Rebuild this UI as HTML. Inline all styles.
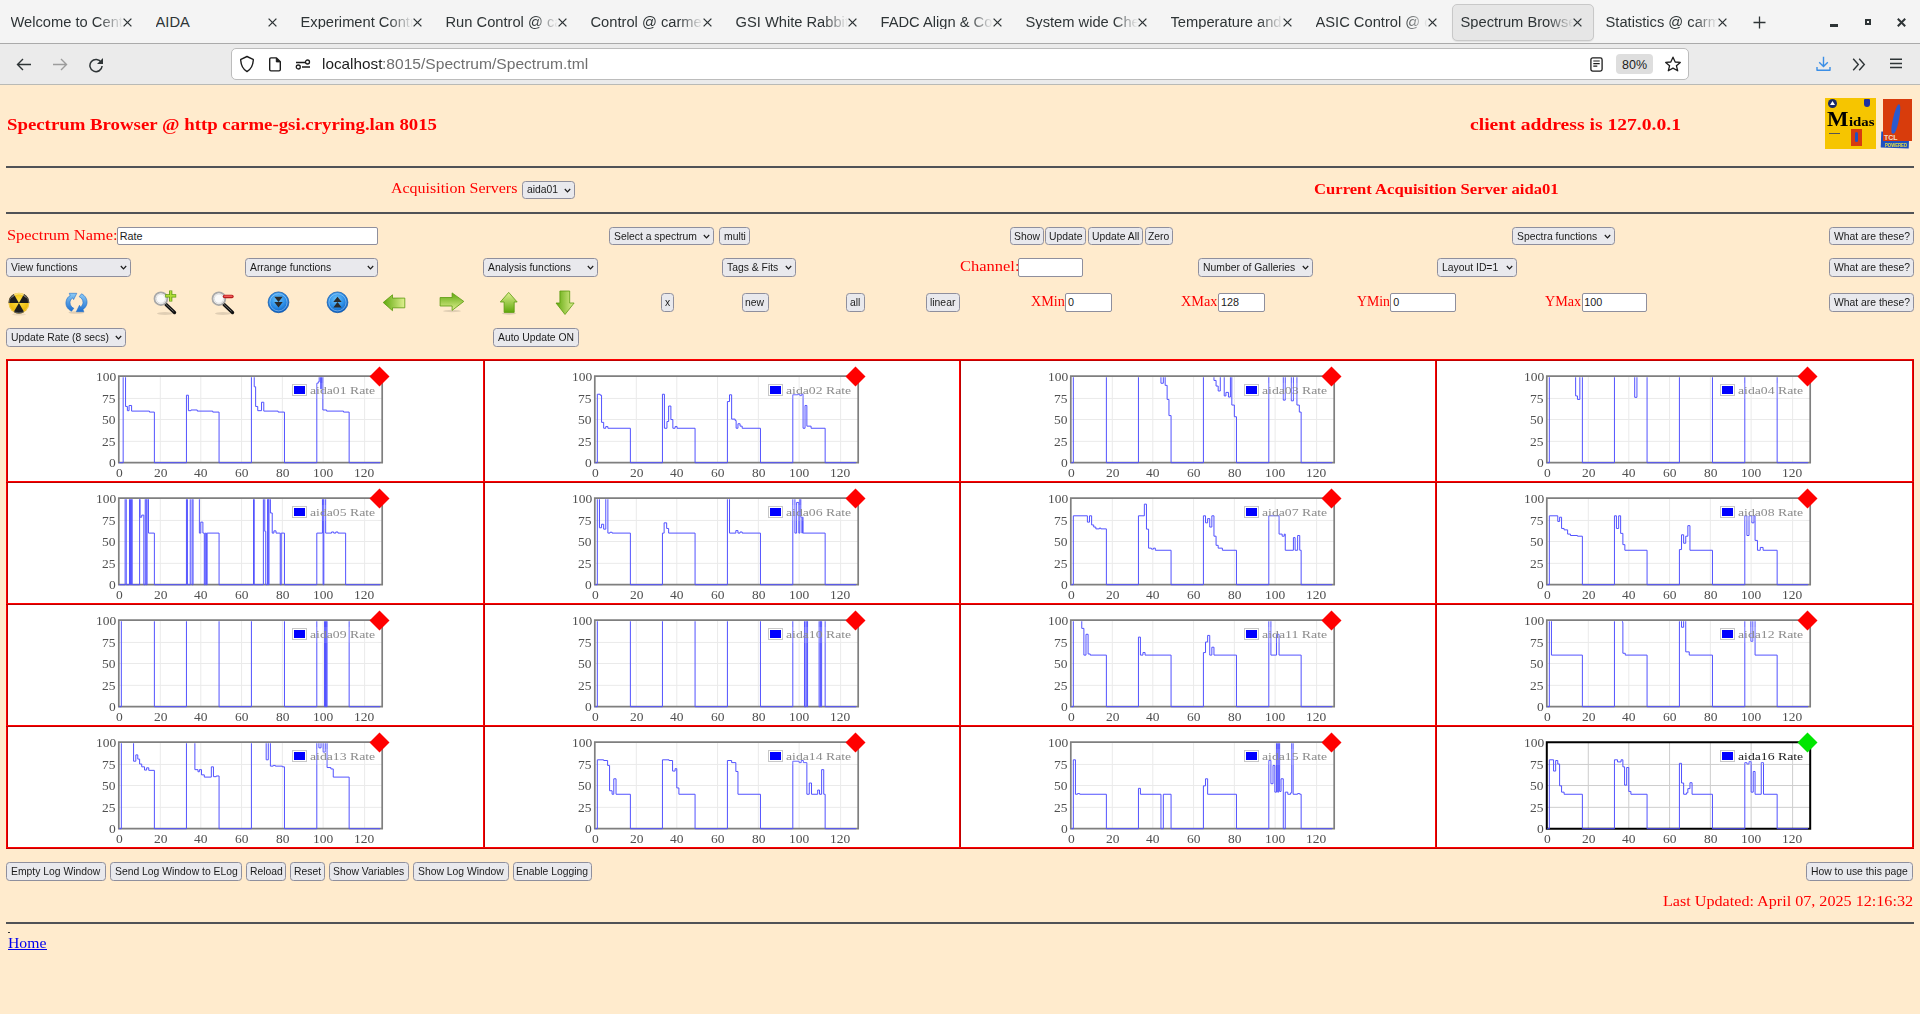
<!DOCTYPE html><html><head><meta charset="utf-8"><style>html,body{margin:0;padding:0;width:1920px;height:1014px;overflow:hidden;background:#ffebcd}</style></head><body><div style="position:relative;width:1920px;height:1014px;overflow:hidden">
<div style="position:absolute;left:0px;top:0px;width:1920px;height:43px;background:#f4f4f4"></div>
<div style="position:absolute;left:0px;top:43px;width:1920px;height:1px;background:#aaaaaa"></div>
<div style="position:absolute;left:0px;top:44px;width:1920px;height:40px;background:#ebebeb"></div>
<div style="position:absolute;left:0px;top:84px;width:1920px;height:1px;background:#b9bab6"></div>
<div style="position:absolute;left:10.5px;top:14.56px;width:112px;overflow:hidden;white-space:nowrap;font-family:'Liberation Sans', sans-serif;font-size:14.7px;line-height:14.7px;color:#2e3436;-webkit-mask-image:linear-gradient(to right, #000 0px, #000 88px, transparent 112px);mask-image:linear-gradient(to right, #000 0px, #000 88px, transparent 112px)">Welcome to Centos</div>
<svg style="position:absolute;left:123.0px;top:17.5px" width="9" height="9" viewBox="0 0 9 9"><path d="M0.6 0.6L8.4 8.4M8.4 0.6L0.6 8.4" stroke="#2e3436" stroke-width="1.3"/></svg>
<div style="position:absolute;left:155.5px;top:14.56px;width:112px;overflow:hidden;white-space:nowrap;font-family:'Liberation Sans', sans-serif;font-size:14.7px;line-height:14.7px;color:#2e3436;-webkit-mask-image:none;mask-image:none">AIDA</div>
<svg style="position:absolute;left:268.0px;top:17.5px" width="9" height="9" viewBox="0 0 9 9"><path d="M0.6 0.6L8.4 8.4M8.4 0.6L0.6 8.4" stroke="#2e3436" stroke-width="1.3"/></svg>
<div style="position:absolute;left:300.5px;top:14.56px;width:112px;overflow:hidden;white-space:nowrap;font-family:'Liberation Sans', sans-serif;font-size:14.7px;line-height:14.7px;color:#2e3436;-webkit-mask-image:linear-gradient(to right, #000 0px, #000 88px, transparent 112px);mask-image:linear-gradient(to right, #000 0px, #000 88px, transparent 112px)">Experiment Control</div>
<svg style="position:absolute;left:413.0px;top:17.5px" width="9" height="9" viewBox="0 0 9 9"><path d="M0.6 0.6L8.4 8.4M8.4 0.6L0.6 8.4" stroke="#2e3436" stroke-width="1.3"/></svg>
<div style="position:absolute;left:445.5px;top:14.56px;width:112px;overflow:hidden;white-space:nowrap;font-family:'Liberation Sans', sans-serif;font-size:14.7px;line-height:14.7px;color:#2e3436;-webkit-mask-image:linear-gradient(to right, #000 0px, #000 88px, transparent 112px);mask-image:linear-gradient(to right, #000 0px, #000 88px, transparent 112px)">Run Control @ carme</div>
<svg style="position:absolute;left:558.0px;top:17.5px" width="9" height="9" viewBox="0 0 9 9"><path d="M0.6 0.6L8.4 8.4M8.4 0.6L0.6 8.4" stroke="#2e3436" stroke-width="1.3"/></svg>
<div style="position:absolute;left:590.5px;top:14.56px;width:112px;overflow:hidden;white-space:nowrap;font-family:'Liberation Sans', sans-serif;font-size:14.7px;line-height:14.7px;color:#2e3436;-webkit-mask-image:linear-gradient(to right, #000 0px, #000 88px, transparent 112px);mask-image:linear-gradient(to right, #000 0px, #000 88px, transparent 112px)">Control @ carme-gsi</div>
<svg style="position:absolute;left:703.0px;top:17.5px" width="9" height="9" viewBox="0 0 9 9"><path d="M0.6 0.6L8.4 8.4M8.4 0.6L0.6 8.4" stroke="#2e3436" stroke-width="1.3"/></svg>
<div style="position:absolute;left:735.5px;top:14.56px;width:112px;overflow:hidden;white-space:nowrap;font-family:'Liberation Sans', sans-serif;font-size:14.7px;line-height:14.7px;color:#2e3436;-webkit-mask-image:linear-gradient(to right, #000 0px, #000 88px, transparent 112px);mask-image:linear-gradient(to right, #000 0px, #000 88px, transparent 112px)">GSI White Rabbit Timing</div>
<svg style="position:absolute;left:848.0px;top:17.5px" width="9" height="9" viewBox="0 0 9 9"><path d="M0.6 0.6L8.4 8.4M8.4 0.6L0.6 8.4" stroke="#2e3436" stroke-width="1.3"/></svg>
<div style="position:absolute;left:880.5px;top:14.56px;width:112px;overflow:hidden;white-space:nowrap;font-family:'Liberation Sans', sans-serif;font-size:14.7px;line-height:14.7px;color:#2e3436;-webkit-mask-image:linear-gradient(to right, #000 0px, #000 88px, transparent 112px);mask-image:linear-gradient(to right, #000 0px, #000 88px, transparent 112px)">FADC Align &amp; Control</div>
<svg style="position:absolute;left:993.0px;top:17.5px" width="9" height="9" viewBox="0 0 9 9"><path d="M0.6 0.6L8.4 8.4M8.4 0.6L0.6 8.4" stroke="#2e3436" stroke-width="1.3"/></svg>
<div style="position:absolute;left:1025.5px;top:14.56px;width:112px;overflow:hidden;white-space:nowrap;font-family:'Liberation Sans', sans-serif;font-size:14.7px;line-height:14.7px;color:#2e3436;-webkit-mask-image:linear-gradient(to right, #000 0px, #000 88px, transparent 112px);mask-image:linear-gradient(to right, #000 0px, #000 88px, transparent 112px)">System wide Checks</div>
<svg style="position:absolute;left:1138.0px;top:17.5px" width="9" height="9" viewBox="0 0 9 9"><path d="M0.6 0.6L8.4 8.4M8.4 0.6L0.6 8.4" stroke="#2e3436" stroke-width="1.3"/></svg>
<div style="position:absolute;left:1170.5px;top:14.56px;width:112px;overflow:hidden;white-space:nowrap;font-family:'Liberation Sans', sans-serif;font-size:14.7px;line-height:14.7px;color:#2e3436;-webkit-mask-image:linear-gradient(to right, #000 0px, #000 88px, transparent 112px);mask-image:linear-gradient(to right, #000 0px, #000 88px, transparent 112px)">Temperature and Status</div>
<svg style="position:absolute;left:1283.0px;top:17.5px" width="9" height="9" viewBox="0 0 9 9"><path d="M0.6 0.6L8.4 8.4M8.4 0.6L0.6 8.4" stroke="#2e3436" stroke-width="1.3"/></svg>
<div style="position:absolute;left:1315.5px;top:14.56px;width:112px;overflow:hidden;white-space:nowrap;font-family:'Liberation Sans', sans-serif;font-size:14.7px;line-height:14.7px;color:#2e3436;-webkit-mask-image:linear-gradient(to right, #000 0px, #000 88px, transparent 112px);mask-image:linear-gradient(to right, #000 0px, #000 88px, transparent 112px)">ASIC Control @ carme</div>
<svg style="position:absolute;left:1428.0px;top:17.5px" width="9" height="9" viewBox="0 0 9 9"><path d="M0.6 0.6L8.4 8.4M8.4 0.6L0.6 8.4" stroke="#2e3436" stroke-width="1.3"/></svg>
<div style="position:absolute;left:1451.5px;top:3.5px;width:142px;height:37px;box-sizing:border-box;background:#e6e6e6;border:1px solid #c8c8c8;border-radius:5px;box-shadow:0 1px 1px rgba(0,0,0,0.08)"></div>
<div style="position:absolute;left:1460.5px;top:14.56px;width:112px;overflow:hidden;white-space:nowrap;font-family:'Liberation Sans', sans-serif;font-size:14.7px;line-height:14.7px;color:#2e3436;-webkit-mask-image:linear-gradient(to right, #000 0px, #000 88px, transparent 112px);mask-image:linear-gradient(to right, #000 0px, #000 88px, transparent 112px)">Spectrum Browser</div>
<svg style="position:absolute;left:1573.0px;top:17.5px" width="9" height="9" viewBox="0 0 9 9"><path d="M0.6 0.6L8.4 8.4M8.4 0.6L0.6 8.4" stroke="#2e3436" stroke-width="1.3"/></svg>
<div style="position:absolute;left:1605.5px;top:14.56px;width:112px;overflow:hidden;white-space:nowrap;font-family:'Liberation Sans', sans-serif;font-size:14.7px;line-height:14.7px;color:#2e3436;-webkit-mask-image:linear-gradient(to right, #000 0px, #000 88px, transparent 112px);mask-image:linear-gradient(to right, #000 0px, #000 88px, transparent 112px)">Statistics @ carme</div>
<svg style="position:absolute;left:1718.0px;top:17.5px" width="9" height="9" viewBox="0 0 9 9"><path d="M0.6 0.6L8.4 8.4M8.4 0.6L0.6 8.4" stroke="#2e3436" stroke-width="1.3"/></svg>
<svg style="position:absolute;left:1753px;top:16px" width="13" height="13" viewBox="0 0 13 13"><path d="M6.5 0.5V12.5M0.5 6.5H12.5" stroke="#2e3436" stroke-width="1.3"/></svg>
<div style="position:absolute;left:1830px;top:24px;width:8px;height:2.5px;background:#2e3436"></div>
<div style="position:absolute;left:1865px;top:19px;width:6px;height:6px;box-sizing:border-box;border:2px solid #2e3436"></div>
<svg style="position:absolute;left:1897px;top:17.5px" width="9" height="9" viewBox="0 0 9 9"><path d="M0.8 0.8L8.2 8.2M8.2 0.8L0.8 8.2" stroke="#2e3436" stroke-width="2"/></svg>
<svg style="position:absolute;left:16px;top:58px" width="16" height="13" viewBox="0 0 16 13"><path d="M15 6.5H2M7 1L1.5 6.5L7 12" fill="none" stroke="#2e3436" stroke-width="1.4"/></svg>
<svg style="position:absolute;left:52px;top:58px" width="16" height="13" viewBox="0 0 16 13"><path d="M1 6.5H14M9 1L14.5 6.5L9 12" fill="none" stroke="#9c9c9c" stroke-width="1.4"/></svg>
<svg style="position:absolute;left:88px;top:57px" width="16" height="16" viewBox="0 0 16 16"><path d="M13.3 5.5A6.1 6.1 0 1 0 14.1 9" fill="none" stroke="#2e3436" stroke-width="1.5"/><path d="M15 1V7H9Z" fill="#2e3436"/></svg>
<div style="position:absolute;left:231px;top:48px;width:1458px;height:32px;box-sizing:border-box;background:#fff;border:1px solid #bcbcbc;border-radius:5px"></div>
<svg style="position:absolute;left:239px;top:55px" width="16" height="18" viewBox="0 0 16 18"><path d="M8 1.5L14.1 4.4Q14.4 4.6 14.3 5.3C13.9 10.8 11.8 14.5 8 16.6C4.2 14.5 2.1 10.8 1.7 5.3Q1.6 4.6 1.9 4.4Z" fill="none" stroke="#1c1c1c" stroke-width="1.4" stroke-linejoin="round"/></svg>
<svg style="position:absolute;left:268px;top:56.5px" width="14" height="15" viewBox="0 0 14 15"><path d="M1.7 2.2Q1.7 0.9 3 0.9H8.5L12.3 4.7V12.6Q12.3 13.9 11 13.9H3Q1.7 13.9 1.7 12.6Z" fill="none" stroke="#1c1c1c" stroke-width="1.4" stroke-linejoin="round"/><path d="M8.3 1V4.9H12.2" fill="#1c1c1c" stroke="#1c1c1c" stroke-width="1"/></svg>
<svg style="position:absolute;left:295px;top:58.5px" width="16" height="11" viewBox="0 0 16 11"><path d="M1 3.5H10M7 8H15" stroke="#1c1c1c" stroke-width="1.4"/><circle cx="12.5" cy="3" r="2" fill="none" stroke="#1c1c1c" stroke-width="1.3"/><circle cx="3.3" cy="8" r="2" fill="none" stroke="#1c1c1c" stroke-width="1.3"/></svg>
<div style="position:absolute;left:321.50px;top:56.30px;white-space:nowrap;font-family:'Liberation Sans', sans-serif;font-weight:normal;font-size:15px;line-height:15px;color:#1c1c1c;transform:scaleX(1.0202);transform-origin:0 0;">localhost</div>
<div style="position:absolute;left:381.90px;top:56.30px;white-space:nowrap;font-family:'Liberation Sans', sans-serif;font-weight:normal;font-size:15px;line-height:15px;color:#6f6f6f;transform:scaleX(1.0387);transform-origin:0 0;">:8015/Spectrum/Spectrum.tml</div>
<svg style="position:absolute;left:1589.5px;top:56.5px" width="13" height="15" viewBox="0 0 13 15"><rect x="0.9" y="0.9" width="11.2" height="13.2" rx="1.8" fill="none" stroke="#1c1c1c" stroke-width="1.3"/><path d="M3.3 4H9.7M3.3 6.6H9.7M3.3 9.2H7.3" stroke="#1c1c1c" stroke-width="1.2"/></svg>
<div style="position:absolute;left:1616px;top:54px;width:37px;height:20px;background:#dedede;border-radius:4px"></div>
<div style="position:absolute;left:1621.99px;top:58.62px;white-space:nowrap;font-family:'Liberation Sans', sans-serif;font-weight:normal;font-size:12.5px;line-height:12.5px;color:#1c1c1c;">80%</div>
<svg style="position:absolute;left:1664px;top:56px" width="18" height="17" viewBox="0 0 18 17"><path d="M9 1.2L11.2 6L16.3 6.4L12.4 9.7L13.7 14.8L9 12.1L4.3 14.8L5.6 9.7L1.7 6.4L6.8 6Z" fill="none" stroke="#1c1c1c" stroke-width="1.3" stroke-linejoin="round"/></svg>
<svg style="position:absolute;left:1816px;top:55.5px" width="15" height="16" viewBox="0 0 15 16"><path d="M7.5 0.8V10.5M3.2 6.3L7.5 10.6L11.8 6.3" fill="none" stroke="#3a8ee6" stroke-width="1.4"/><path d="M1 11V14.3H14V11" fill="none" stroke="#3a8ee6" stroke-width="1.4" stroke-linejoin="round"/></svg>
<svg style="position:absolute;left:1852px;top:57.5px" width="15" height="13" viewBox="0 0 15 13"><path d="M1.2 0.8L6.3 6.5L1.2 12.2M7.2 0.8L12.3 6.5L7.2 12.2" fill="none" stroke="#2e3436" stroke-width="1.4"/></svg>
<svg style="position:absolute;left:1889px;top:57px" width="14" height="12" viewBox="0 0 14 12"><path d="M1 2.3H13M1 6.5H13M1 10.5H13" stroke="#2e3436" stroke-width="1.4"/></svg>
<div style="position:absolute;left:0px;top:85px;width:1920px;height:929px;background:#ffebcd"></div>
<div style="position:absolute;left:7.00px;top:115.76px;white-space:nowrap;font-family:'Liberation Serif', serif;font-weight:bold;font-size:17px;line-height:17px;color:#ff0000;transform:scaleX(1.1064);transform-origin:0 0;">Spectrum Browser @ http carme-gsi.cryring.lan 8015</div>
<div style="position:absolute;left:1470.20px;top:115.76px;white-space:nowrap;font-family:'Liberation Serif', serif;font-weight:bold;font-size:17px;line-height:17px;color:#ff0000;transform:scaleX(1.1535);transform-origin:0 0;">client address is 127.0.0.1</div>
<div style="position:absolute;left:1825px;top:98px;width:51px;height:51px;background:#f6c500"></div>
<div style="position:absolute;left:1828px;top:99px;width:9px;height:9px;border-radius:50%;background:#1a2a6a"></div>
<svg style="position:absolute;left:1829px;top:100px" width="7" height="6" viewBox="0 0 7 6"><path d="M3.5 1L6 5H1Z" fill="#fff"/></svg>
<div style="position:absolute;left:1864px;top:99px;width:6px;height:8px;border-radius:1px 1px 3px 3px;background:#2030a0"></div>
<div style="position:absolute;left:1827.00px;top:107.88px;white-space:nowrap;font-family:'Liberation Serif', serif;font-weight:bold;font-size:22px;line-height:22px;color:#000;transform:scaleX(1.0354);transform-origin:0 0;">M</div>
<div style="position:absolute;left:1849.00px;top:115.41px;white-space:nowrap;font-family:'Liberation Serif', serif;font-weight:bold;font-size:13px;line-height:13px;color:#000;transform:scaleX(1.1384);transform-origin:0 0;">idas</div>
<div style="position:absolute;left:1829px;top:133px;width:11px;height:1.2px;background:#555"></div>
<div style="position:absolute;left:1851px;top:129px;width:11px;height:17px;background:#d63a10"></div>
<div style="position:absolute;left:1855px;top:132px;width:3px;height:10px;background:#2050c0;border-radius:2px"></div>
<div style="position:absolute;left:1881px;top:132px;width:28px;height:16px;background:#1f4fc0;transform:rotate(2deg)"></div>
<div style="position:absolute;left:1883px;top:99px;width:29px;height:42px;background:#d83c0c"></div>
<div style="position:absolute;left:1893px;top:104px;width:6px;height:30px;background:#2a5ad0;border-radius:50% 50% 40% 40%;transform:rotate(12deg)"></div>
<div style="position:absolute;left:1884.00px;top:134.07px;white-space:nowrap;font-family:'Liberation Sans', sans-serif;font-weight:bold;font-size:7px;line-height:7px;color:#f0e0d0;">TCL</div>
<div style="position:absolute;left:1885.00px;top:142.84px;white-space:nowrap;font-family:'Liberation Sans', sans-serif;font-weight:bold;font-size:5.5px;line-height:5.5px;color:#e8e040;transform:scaleX(0.7741);transform-origin:0 0;">POWERED</div>
<div style="position:absolute;left:6px;top:166px;width:1908px;height:2px;background:#505256"></div>
<div style="position:absolute;left:391.10px;top:180.86px;white-space:nowrap;font-family:'Liberation Serif', serif;font-weight:normal;font-size:14.5px;line-height:14.5px;color:#ff0000;transform:scaleX(1.1013);transform-origin:0 0;">Acquisition Servers</div>
<div style="position:absolute;left:522.00px;top:181.20px;width:53.00px;height:17.80px;box-sizing:border-box;background:#e9e9ed;border:1px solid #8f8f9d;border-radius:3.5px"></div>
<div style="position:absolute;left:526.60px;top:183.76px;white-space:nowrap;font-family:'Liberation Sans', sans-serif;font-weight:normal;font-size:10.8px;line-height:10.8px;color:#1b1b1b;transform:scaleX(0.9600);transform-origin:0 0;">aida01</div>
<svg style="position:absolute;left:563.90px;top:187.90px" width="7" height="5" viewBox="0 0 7 5"><path d="M0.8 1L3.5 3.8L6.2 1" fill="none" stroke="#1b1b1b" stroke-width="1.2"/></svg>
<div style="position:absolute;left:1314.00px;top:181.39px;white-space:nowrap;font-family:'Liberation Serif', serif;font-weight:bold;font-size:15.3px;line-height:15.3px;color:#ff0000;transform:scaleX(1.0866);transform-origin:0 0;">Current Acquisition Server aida01</div>
<div style="position:absolute;left:6px;top:212px;width:1908px;height:2px;background:#505256"></div>
<div style="position:absolute;left:7.30px;top:228.24px;white-space:nowrap;font-family:'Liberation Serif', serif;font-weight:normal;font-size:15px;line-height:15px;color:#ff0000;transform:scaleX(1.0917);transform-origin:0 0;">Spectrum Name:</div>
<div style="position:absolute;left:117.00px;top:227.30px;width:261.00px;height:17.30px;box-sizing:border-box;background:#fff;border:1px solid #8f8f9d;border-radius:2px"></div>
<div style="position:absolute;left:119.80px;top:230.71px;white-space:nowrap;font-family:'Liberation Sans', sans-serif;font-weight:normal;font-size:10.8px;line-height:10.8px;color:#1b1b1b;">Rate</div>
<div style="position:absolute;left:609.20px;top:227.20px;width:105.20px;height:17.60px;box-sizing:border-box;background:#e9e9ed;border:1px solid #8f8f9d;border-radius:3.5px"></div>
<div style="position:absolute;left:613.80px;top:230.76px;white-space:nowrap;font-family:'Liberation Sans', sans-serif;font-weight:normal;font-size:10.8px;line-height:10.8px;color:#1b1b1b;transform:scaleX(0.9600);transform-origin:0 0;">Select a spectrum</div>
<svg style="position:absolute;left:703.30px;top:233.80px" width="7" height="5" viewBox="0 0 7 5"><path d="M0.8 1L3.5 3.8L6.2 1" fill="none" stroke="#1b1b1b" stroke-width="1.2"/></svg>
<div style="position:absolute;left:719.20px;top:227.20px;width:31.20px;height:17.60px;box-sizing:border-box;background:#e9e9ed;border:1px solid #8f8f9d;border-radius:3.5px"></div>
<div style="position:absolute;left:723.85px;top:230.76px;white-space:nowrap;font-family:'Liberation Sans', sans-serif;font-weight:normal;font-size:10.8px;line-height:10.8px;color:#1b1b1b;transform:scaleX(0.9600);transform-origin:0 0;">multi</div>
<div style="position:absolute;left:1010.20px;top:227.20px;width:34.00px;height:17.60px;box-sizing:border-box;background:#e9e9ed;border:1px solid #8f8f9d;border-radius:3.5px"></div>
<div style="position:absolute;left:1014.23px;top:230.76px;white-space:nowrap;font-family:'Liberation Sans', sans-serif;font-weight:normal;font-size:10.8px;line-height:10.8px;color:#1b1b1b;transform:scaleX(0.9600);transform-origin:0 0;">Show</div>
<div style="position:absolute;left:1045.40px;top:227.20px;width:40.60px;height:17.60px;box-sizing:border-box;background:#e9e9ed;border:1px solid #8f8f9d;border-radius:3.5px"></div>
<div style="position:absolute;left:1048.98px;top:230.76px;white-space:nowrap;font-family:'Liberation Sans', sans-serif;font-weight:normal;font-size:10.8px;line-height:10.8px;color:#1b1b1b;transform:scaleX(0.9600);transform-origin:0 0;">Update</div>
<div style="position:absolute;left:1087.70px;top:227.20px;width:55.60px;height:17.60px;box-sizing:border-box;background:#e9e9ed;border:1px solid #8f8f9d;border-radius:3.5px"></div>
<div style="position:absolute;left:1091.87px;top:230.76px;white-space:nowrap;font-family:'Liberation Sans', sans-serif;font-weight:normal;font-size:10.8px;line-height:10.8px;color:#1b1b1b;transform:scaleX(0.9600);transform-origin:0 0;">Update All</div>
<div style="position:absolute;left:1144.60px;top:227.20px;width:28.10px;height:17.60px;box-sizing:border-box;background:#e9e9ed;border:1px solid #8f8f9d;border-radius:3.5px"></div>
<div style="position:absolute;left:1147.99px;top:230.76px;white-space:nowrap;font-family:'Liberation Sans', sans-serif;font-weight:normal;font-size:10.8px;line-height:10.8px;color:#1b1b1b;transform:scaleX(0.9600);transform-origin:0 0;">Zero</div>
<div style="position:absolute;left:1512.30px;top:227.20px;width:103.10px;height:17.60px;box-sizing:border-box;background:#e9e9ed;border:1px solid #8f8f9d;border-radius:3.5px"></div>
<div style="position:absolute;left:1516.90px;top:230.76px;white-space:nowrap;font-family:'Liberation Sans', sans-serif;font-weight:normal;font-size:10.8px;line-height:10.8px;color:#1b1b1b;transform:scaleX(0.9600);transform-origin:0 0;">Spectra functions</div>
<svg style="position:absolute;left:1604.30px;top:233.80px" width="7" height="5" viewBox="0 0 7 5"><path d="M0.8 1L3.5 3.8L6.2 1" fill="none" stroke="#1b1b1b" stroke-width="1.2"/></svg>
<div style="position:absolute;left:1829.40px;top:227.20px;width:84.40px;height:17.60px;box-sizing:border-box;background:#e9e9ed;border:1px solid #8f8f9d;border-radius:3.5px"></div>
<div style="position:absolute;left:1833.56px;top:230.76px;white-space:nowrap;font-family:'Liberation Sans', sans-serif;font-weight:normal;font-size:10.8px;line-height:10.8px;color:#1b1b1b;transform:scaleX(0.9600);transform-origin:0 0;">What are these?</div>
<div style="position:absolute;left:6.30px;top:258.30px;width:124.30px;height:18.40px;box-sizing:border-box;background:#e9e9ed;border:1px solid #8f8f9d;border-radius:3.5px"></div>
<div style="position:absolute;left:10.90px;top:262.26px;white-space:nowrap;font-family:'Liberation Sans', sans-serif;font-weight:normal;font-size:10.8px;line-height:10.8px;color:#1b1b1b;transform:scaleX(0.9600);transform-origin:0 0;">View functions</div>
<svg style="position:absolute;left:119.50px;top:265.30px" width="7" height="5" viewBox="0 0 7 5"><path d="M0.8 1L3.5 3.8L6.2 1" fill="none" stroke="#1b1b1b" stroke-width="1.2"/></svg>
<div style="position:absolute;left:245.20px;top:258.30px;width:133.30px;height:18.40px;box-sizing:border-box;background:#e9e9ed;border:1px solid #8f8f9d;border-radius:3.5px"></div>
<div style="position:absolute;left:249.80px;top:262.26px;white-space:nowrap;font-family:'Liberation Sans', sans-serif;font-weight:normal;font-size:10.8px;line-height:10.8px;color:#1b1b1b;transform:scaleX(0.9600);transform-origin:0 0;">Arrange functions</div>
<svg style="position:absolute;left:367.40px;top:265.30px" width="7" height="5" viewBox="0 0 7 5"><path d="M0.8 1L3.5 3.8L6.2 1" fill="none" stroke="#1b1b1b" stroke-width="1.2"/></svg>
<div style="position:absolute;left:483.10px;top:258.30px;width:114.60px;height:18.40px;box-sizing:border-box;background:#e9e9ed;border:1px solid #8f8f9d;border-radius:3.5px"></div>
<div style="position:absolute;left:487.70px;top:262.26px;white-space:nowrap;font-family:'Liberation Sans', sans-serif;font-weight:normal;font-size:10.8px;line-height:10.8px;color:#1b1b1b;transform:scaleX(0.9600);transform-origin:0 0;">Analysis functions</div>
<svg style="position:absolute;left:586.60px;top:265.30px" width="7" height="5" viewBox="0 0 7 5"><path d="M0.8 1L3.5 3.8L6.2 1" fill="none" stroke="#1b1b1b" stroke-width="1.2"/></svg>
<div style="position:absolute;left:722.30px;top:258.30px;width:74.20px;height:18.40px;box-sizing:border-box;background:#e9e9ed;border:1px solid #8f8f9d;border-radius:3.5px"></div>
<div style="position:absolute;left:726.90px;top:262.26px;white-space:nowrap;font-family:'Liberation Sans', sans-serif;font-weight:normal;font-size:10.8px;line-height:10.8px;color:#1b1b1b;transform:scaleX(0.9600);transform-origin:0 0;">Tags &amp; Fits</div>
<svg style="position:absolute;left:785.40px;top:265.30px" width="7" height="5" viewBox="0 0 7 5"><path d="M0.8 1L3.5 3.8L6.2 1" fill="none" stroke="#1b1b1b" stroke-width="1.2"/></svg>
<div style="position:absolute;left:960.40px;top:259.24px;white-space:nowrap;font-family:'Liberation Serif', serif;font-weight:normal;font-size:15px;line-height:15px;color:#ff0000;transform:scaleX(1.0987);transform-origin:0 0;">Channel:</div>
<div style="position:absolute;left:1018.30px;top:258.30px;width:65.20px;height:18.40px;box-sizing:border-box;background:#fff;border:1px solid #8f8f9d;border-radius:2px"></div>
<div style="position:absolute;left:1198.30px;top:258.30px;width:115.20px;height:18.40px;box-sizing:border-box;background:#e9e9ed;border:1px solid #8f8f9d;border-radius:3.5px"></div>
<div style="position:absolute;left:1202.90px;top:262.26px;white-space:nowrap;font-family:'Liberation Sans', sans-serif;font-weight:normal;font-size:10.8px;line-height:10.8px;color:#1b1b1b;transform:scaleX(0.9600);transform-origin:0 0;">Number of Galleries</div>
<svg style="position:absolute;left:1302.40px;top:265.30px" width="7" height="5" viewBox="0 0 7 5"><path d="M0.8 1L3.5 3.8L6.2 1" fill="none" stroke="#1b1b1b" stroke-width="1.2"/></svg>
<div style="position:absolute;left:1437.30px;top:258.30px;width:79.40px;height:18.40px;box-sizing:border-box;background:#e9e9ed;border:1px solid #8f8f9d;border-radius:3.5px"></div>
<div style="position:absolute;left:1441.90px;top:262.26px;white-space:nowrap;font-family:'Liberation Sans', sans-serif;font-weight:normal;font-size:10.8px;line-height:10.8px;color:#1b1b1b;transform:scaleX(0.9600);transform-origin:0 0;">Layout ID=1</div>
<svg style="position:absolute;left:1505.60px;top:265.30px" width="7" height="5" viewBox="0 0 7 5"><path d="M0.8 1L3.5 3.8L6.2 1" fill="none" stroke="#1b1b1b" stroke-width="1.2"/></svg>
<div style="position:absolute;left:1829.40px;top:258.30px;width:84.40px;height:18.40px;box-sizing:border-box;background:#e9e9ed;border:1px solid #8f8f9d;border-radius:3.5px"></div>
<div style="position:absolute;left:1833.56px;top:262.26px;white-space:nowrap;font-family:'Liberation Sans', sans-serif;font-weight:normal;font-size:10.8px;line-height:10.8px;color:#1b1b1b;transform:scaleX(0.9600);transform-origin:0 0;">What are these?</div>
<div style="position:absolute;left:661.30px;top:293.30px;width:12.50px;height:18.30px;box-sizing:border-box;background:#e9e9ed;border:1px solid #8f8f9d;border-radius:3.5px"></div>
<div style="position:absolute;left:664.96px;top:297.21px;white-space:nowrap;font-family:'Liberation Sans', sans-serif;font-weight:normal;font-size:10.8px;line-height:10.8px;color:#1b1b1b;transform:scaleX(0.9600);transform-origin:0 0;">x</div>
<div style="position:absolute;left:741.50px;top:293.30px;width:27.00px;height:18.30px;box-sizing:border-box;background:#e9e9ed;border:1px solid #8f8f9d;border-radius:3.5px"></div>
<div style="position:absolute;left:745.49px;top:297.21px;white-space:nowrap;font-family:'Liberation Sans', sans-serif;font-weight:normal;font-size:10.8px;line-height:10.8px;color:#1b1b1b;transform:scaleX(0.9600);transform-origin:0 0;">new</div>
<div style="position:absolute;left:846.00px;top:293.30px;width:18.60px;height:18.30px;box-sizing:border-box;background:#e9e9ed;border:1px solid #8f8f9d;border-radius:3.5px"></div>
<div style="position:absolute;left:850.11px;top:297.21px;white-space:nowrap;font-family:'Liberation Sans', sans-serif;font-weight:normal;font-size:10.8px;line-height:10.8px;color:#1b1b1b;transform:scaleX(0.9600);transform-origin:0 0;">all</div>
<div style="position:absolute;left:926.30px;top:293.30px;width:33.30px;height:18.30px;box-sizing:border-box;background:#e9e9ed;border:1px solid #8f8f9d;border-radius:3.5px"></div>
<div style="position:absolute;left:930.27px;top:297.21px;white-space:nowrap;font-family:'Liberation Sans', sans-serif;font-weight:normal;font-size:10.8px;line-height:10.8px;color:#1b1b1b;transform:scaleX(0.9600);transform-origin:0 0;">linear</div>
<div style="position:absolute;left:1030.80px;top:294.24px;white-space:nowrap;font-family:'Liberation Serif', serif;font-weight:normal;font-size:15px;line-height:15px;color:#ff0000;transform:scaleX(0.9432);transform-origin:0 0;">XMin</div>
<div style="position:absolute;left:1065.20px;top:293.30px;width:47.30px;height:18.30px;box-sizing:border-box;background:#fff;border:1px solid #8f8f9d;border-radius:2px"></div>
<div style="position:absolute;left:1068.00px;top:297.21px;white-space:nowrap;font-family:'Liberation Sans', sans-serif;font-weight:normal;font-size:10.8px;line-height:10.8px;color:#1b1b1b;">0</div>
<div style="position:absolute;left:1181.00px;top:294.24px;white-space:nowrap;font-family:'Liberation Serif', serif;font-weight:normal;font-size:15px;line-height:15px;color:#ff0000;transform:scaleX(0.9523);transform-origin:0 0;">XMax</div>
<div style="position:absolute;left:1218.30px;top:293.30px;width:46.30px;height:18.30px;box-sizing:border-box;background:#fff;border:1px solid #8f8f9d;border-radius:2px"></div>
<div style="position:absolute;left:1221.10px;top:297.21px;white-space:nowrap;font-family:'Liberation Sans', sans-serif;font-weight:normal;font-size:10.8px;line-height:10.8px;color:#1b1b1b;">128</div>
<div style="position:absolute;left:1356.70px;top:294.24px;white-space:nowrap;font-family:'Liberation Serif', serif;font-weight:normal;font-size:15px;line-height:15px;color:#ff0000;transform:scaleX(0.9180);transform-origin:0 0;">YMin</div>
<div style="position:absolute;left:1390.40px;top:293.30px;width:65.20px;height:18.30px;box-sizing:border-box;background:#fff;border:1px solid #8f8f9d;border-radius:2px"></div>
<div style="position:absolute;left:1393.20px;top:297.21px;white-space:nowrap;font-family:'Liberation Sans', sans-serif;font-weight:normal;font-size:10.8px;line-height:10.8px;color:#1b1b1b;">0</div>
<div style="position:absolute;left:1544.60px;top:294.24px;white-space:nowrap;font-family:'Liberation Serif', serif;font-weight:normal;font-size:15px;line-height:15px;color:#ff0000;transform:scaleX(0.9445);transform-origin:0 0;">YMax</div>
<div style="position:absolute;left:1581.50px;top:293.30px;width:65.20px;height:18.30px;box-sizing:border-box;background:#fff;border:1px solid #8f8f9d;border-radius:2px"></div>
<div style="position:absolute;left:1584.30px;top:297.21px;white-space:nowrap;font-family:'Liberation Sans', sans-serif;font-weight:normal;font-size:10.8px;line-height:10.8px;color:#1b1b1b;">100</div>
<div style="position:absolute;left:1829.40px;top:293.30px;width:84.40px;height:18.30px;box-sizing:border-box;background:#e9e9ed;border:1px solid #8f8f9d;border-radius:3.5px"></div>
<div style="position:absolute;left:1833.56px;top:297.21px;white-space:nowrap;font-family:'Liberation Sans', sans-serif;font-weight:normal;font-size:10.8px;line-height:10.8px;color:#1b1b1b;transform:scaleX(0.9600);transform-origin:0 0;">What are these?</div>
<div style="position:absolute;left:6.30px;top:328.20px;width:119.30px;height:18.80px;box-sizing:border-box;background:#e9e9ed;border:1px solid #8f8f9d;border-radius:3.5px"></div>
<div style="position:absolute;left:10.90px;top:332.36px;white-space:nowrap;font-family:'Liberation Sans', sans-serif;font-weight:normal;font-size:10.8px;line-height:10.8px;color:#1b1b1b;transform:scaleX(0.9600);transform-origin:0 0;">Update Rate (8 secs)</div>
<svg style="position:absolute;left:114.50px;top:335.40px" width="7" height="5" viewBox="0 0 7 5"><path d="M0.8 1L3.5 3.8L6.2 1" fill="none" stroke="#1b1b1b" stroke-width="1.2"/></svg>
<div style="position:absolute;left:493.00px;top:328.20px;width:85.50px;height:18.80px;box-sizing:border-box;background:#e9e9ed;border:1px solid #8f8f9d;border-radius:3.5px"></div>
<div style="position:absolute;left:497.71px;top:332.36px;white-space:nowrap;font-family:'Liberation Sans', sans-serif;font-weight:normal;font-size:10.8px;line-height:10.8px;color:#1b1b1b;transform:scaleX(0.9600);transform-origin:0 0;">Auto Update ON</div>
<svg style="position:absolute;left:7px;top:292px" width="24" height="26" viewBox="0 0 24 26"><defs><radialGradient id="ry" cx="0.5" cy="0.4" r="0.6"><stop offset="0" stop-color="#ffe34a"/><stop offset="1" stop-color="#e8b000"/></radialGradient></defs><ellipse cx="12" cy="22.3" rx="7" ry="1.2" fill="rgba(0,0,0,0.08)"/><circle cx="11.9" cy="11.1" r="10.4" fill="url(#ry)"/><path d="M11.9 11.1L22.30 11.10A10.4 10.4 0 0 0 17.10 2.09Z" fill="#1c1c1c"/><path d="M11.9 11.1L6.70 2.09A10.4 10.4 0 0 0 1.50 11.10Z" fill="#1c1c1c"/><path d="M11.9 11.1L6.70 20.11A10.4 10.4 0 0 0 17.10 20.11Z" fill="#1c1c1c"/><circle cx="11.9" cy="11.1" r="9.8" fill="none" stroke="rgba(255,255,255,0.3)" stroke-width="0.9"/><path d="M4.9 5.6A8.5 8.5 0 0 1 18.9 5.6" fill="none" stroke="rgba(255,255,255,0.45)" stroke-width="1"/></svg>
<svg style="position:absolute;left:64px;top:291px" width="25" height="24" viewBox="0 0 25 24"><defs><linearGradient id="rb" x1="0" y1="0" x2="0" y2="1"><stop offset="0" stop-color="#8ccaf5"/><stop offset="1" stop-color="#1d6fd0"/></linearGradient></defs><ellipse cx="12.5" cy="21.5" rx="8" ry="1.3" fill="rgba(0,0,0,0.12)"/><path d="M7.5 20.2C3.2 18 1.5 14.5 2 10.8C2.4 7.8 4.2 5.6 6.2 4.6L5.3 2.3H12.8L9.6 8.6L8.7 6.9C7 8 6 9.6 6 11.5C6 14.2 7.5 16.3 9.8 17.3Z" fill="url(#rb)" stroke="#1e6bc8" stroke-width="0.6"/><path d="M17.5 2.8C21.6 4.9 23.4 8.6 23 12.2C22.6 15.2 20.8 17.3 18.9 18.4L19.8 20.7H12.3L15.5 14.3L16.4 16.1C18.1 15 19 13.4 19 11.5C19 8.8 17.5 6.8 15.2 5.7Z" fill="url(#rb)" stroke="#1e6bc8" stroke-width="0.6"/></svg>
<svg style="position:absolute;left:152px;top:290px" width="26" height="26" viewBox="0 0 26 26"><ellipse cx="13" cy="23.5" rx="8" ry="1.4" fill="rgba(0,0,0,0.12)"/><path d="M14 14.5L22.5 22.5" stroke="#111" stroke-width="3.4" stroke-linecap="round"/><path d="M13.8 14.2L21.5 21.4" stroke="#888" stroke-width="0.8"/><circle cx="8.9" cy="8.7" r="6.4" fill="#fafafa" stroke="#a8a8a8" stroke-width="1.8"/><circle cx="8.9" cy="8.7" r="4.6" fill="none" stroke="#ddd" stroke-width="1"/><path d="M18.7 0.5V11.5M13.2 5.9H24.2" stroke="#5a9a0a" stroke-width="3.2"/><path d="M18.7 1.1V10.9M13.8 5.9H23.6" stroke="#b0dc38" stroke-width="1.6"/></svg>
<svg style="position:absolute;left:210px;top:290px" width="26" height="26" viewBox="0 0 26 26"><ellipse cx="13" cy="23.5" rx="8" ry="1.4" fill="rgba(0,0,0,0.12)"/><path d="M14 14.5L22.5 22.5" stroke="#111" stroke-width="3.4" stroke-linecap="round"/><path d="M13.8 14.2L21.5 21.4" stroke="#888" stroke-width="0.8"/><circle cx="8.9" cy="8.7" r="6.4" fill="#fafafa" stroke="#a8a8a8" stroke-width="1.8"/><circle cx="8.9" cy="8.7" r="4.6" fill="none" stroke="#ddd" stroke-width="1"/><path d="M14.5 6.5H22" stroke="#b81c1c" stroke-width="3.4" stroke-linecap="round"/><path d="M14.6 6.2H21.9" stroke="#f05a5a" stroke-width="1.4" stroke-linecap="round"/></svg>
<svg style="position:absolute;left:267px;top:291px" width="23" height="23" viewBox="0 0 23 23"><defs><radialGradient id="bg267" cx="0.45" cy="0.35" r="0.65"><stop offset="0" stop-color="#6cc4fa"/><stop offset="0.6" stop-color="#2a8ce6"/><stop offset="1" stop-color="#0d5fc0"/></radialGradient></defs><circle cx="11.5" cy="11.3" r="10.4" fill="url(#bg267)" stroke="#0d55a8" stroke-width="0.7"/><circle cx="11.5" cy="11.3" r="8.6" fill="none" stroke="rgba(255,255,255,0.45)" stroke-width="0.8"/><path d="M7.3 5.8H15.7L11.5 11Z M7.3 11H15.7L11.5 16.6Z" fill="#2b2b2b"/></svg>
<svg style="position:absolute;left:326px;top:291px" width="23" height="23" viewBox="0 0 23 23"><defs><radialGradient id="bg326" cx="0.45" cy="0.35" r="0.65"><stop offset="0" stop-color="#6cc4fa"/><stop offset="0.6" stop-color="#2a8ce6"/><stop offset="1" stop-color="#0d5fc0"/></radialGradient></defs><circle cx="11.5" cy="11.3" r="10.4" fill="url(#bg326)" stroke="#0d55a8" stroke-width="0.7"/><circle cx="11.5" cy="11.3" r="8.6" fill="none" stroke="rgba(255,255,255,0.45)" stroke-width="0.8"/><path d="M7.3 11H15.7L11.5 5.8Z M7.3 16.6H15.7L11.5 11Z" fill="#2b2b2b"/></svg>
<svg style="position:absolute;left:381px;top:292px" width="26" height="22" viewBox="0 0 26 22"><defs><linearGradient id="ga1" x1="1" y1="0" x2="0" y2="0"><stop offset="0" stop-color="#e0f090"/><stop offset="1" stop-color="#5fa80c"/></linearGradient></defs><path d="M2.2 10.5L11.5 2.8V6.1H23.8V15.8H11.5V18.7Z" fill="url(#ga1)" stroke="#5b9a0e" stroke-width="0.8" stroke-linejoin="round"/></svg>
<svg style="position:absolute;left:438px;top:291px" width="28" height="22" viewBox="0 0 28 22"><defs><linearGradient id="ga2" x1="0" y1="1" x2="0" y2="0"><stop offset="0" stop-color="#e0f090"/><stop offset="1" stop-color="#5fa80c"/></linearGradient></defs><ellipse cx="14" cy="20" rx="9" ry="1.2" fill="rgba(0,0,0,0.12)"/><path d="M2.1 6.5H14.1V1.9L25.8 10.4L14.1 19.4V15H2.1Z" fill="url(#ga2)" stroke="#5b9a0e" stroke-width="0.8" stroke-linejoin="round"/></svg>
<svg style="position:absolute;left:498px;top:290px" width="22" height="26" viewBox="0 0 22 26"><defs><linearGradient id="ga3" x1="0" y1="0" x2="0" y2="1"><stop offset="0" stop-color="#e0f090"/><stop offset="1" stop-color="#5fa80c"/></linearGradient></defs><ellipse cx="11" cy="23.5" rx="7" ry="1.2" fill="rgba(0,0,0,0.14)"/><path d="M10.7 2.4L19.2 12H16.2V22.4H6.1V12H2.3Z" fill="url(#ga3)" stroke="#5b9a0e" stroke-width="0.8" stroke-linejoin="round"/></svg>
<svg style="position:absolute;left:554px;top:289px" width="22" height="28" viewBox="0 0 22 28"><defs><linearGradient id="ga4" x1="1" y1="0" x2="0" y2="0"><stop offset="0" stop-color="#e0f090"/><stop offset="1" stop-color="#5fa80c"/></linearGradient></defs><path d="M5.9 2H15.7V14H20.1L11 25.5L2 14H5.9Z" fill="url(#ga4)" stroke="#5b9a0e" stroke-width="0.8" stroke-linejoin="round"/></svg>
<div style="position:absolute;left:6px;top:359px;width:1908px;height:490px;background:#fff"></div>
<div style="position:absolute;left:6px;top:359px;width:1px;height:490px;background:#ff0000"></div>
<div style="position:absolute;left:7px;top:359px;width:1px;height:490px;background:#c00000"></div>
<div style="position:absolute;left:483px;top:359px;width:1px;height:490px;background:#ff0000"></div>
<div style="position:absolute;left:484px;top:359px;width:1px;height:490px;background:#c00000"></div>
<div style="position:absolute;left:959px;top:359px;width:1px;height:490px;background:#ff0000"></div>
<div style="position:absolute;left:960px;top:359px;width:1px;height:490px;background:#c00000"></div>
<div style="position:absolute;left:1435px;top:359px;width:1px;height:490px;background:#ff0000"></div>
<div style="position:absolute;left:1436px;top:359px;width:1px;height:490px;background:#c00000"></div>
<div style="position:absolute;left:1912px;top:359px;width:1px;height:490px;background:#ff0000"></div>
<div style="position:absolute;left:1913px;top:359px;width:1px;height:490px;background:#c00000"></div>
<div style="position:absolute;left:6px;top:359px;width:1908px;height:1px;background:#ff0000"></div>
<div style="position:absolute;left:6px;top:360px;width:1908px;height:1px;background:#c00000"></div>
<div style="position:absolute;left:6px;top:481px;width:1908px;height:1px;background:#ff0000"></div>
<div style="position:absolute;left:6px;top:482px;width:1908px;height:1px;background:#c00000"></div>
<div style="position:absolute;left:6px;top:603px;width:1908px;height:1px;background:#ff0000"></div>
<div style="position:absolute;left:6px;top:604px;width:1908px;height:1px;background:#c00000"></div>
<div style="position:absolute;left:6px;top:725px;width:1908px;height:1px;background:#ff0000"></div>
<div style="position:absolute;left:6px;top:726px;width:1908px;height:1px;background:#c00000"></div>
<div style="position:absolute;left:6px;top:847px;width:1908px;height:1px;background:#ff0000"></div>
<div style="position:absolute;left:6px;top:848px;width:1908px;height:1px;background:#c00000"></div>
<svg style="position:absolute;left:115px;top:372px" width="270" height="94" viewBox="0 0 1920 668.44" preserveAspectRatio="none"><defs><clipPath id="cp1"><rect x="27" y="37" width="1873" height="620"/></clipPath></defs><line x1="322" y1="30" x2="322" y2="645" stroke="#eaeaea" stroke-width="1" vector-effect="non-scaling-stroke"/><line x1="610" y1="30" x2="610" y2="645" stroke="#eaeaea" stroke-width="1" vector-effect="non-scaling-stroke"/><line x1="900" y1="30" x2="900" y2="645" stroke="#eaeaea" stroke-width="1" vector-effect="non-scaling-stroke"/><line x1="1190" y1="30" x2="1190" y2="645" stroke="#eaeaea" stroke-width="1" vector-effect="non-scaling-stroke"/><line x1="1480" y1="30" x2="1480" y2="645" stroke="#eaeaea" stroke-width="1" vector-effect="non-scaling-stroke"/><line x1="1775" y1="30" x2="1775" y2="645" stroke="#eaeaea" stroke-width="1" vector-effect="non-scaling-stroke"/><line x1="27" y1="188" x2="1900" y2="188" stroke="#eaeaea" stroke-width="1" vector-effect="non-scaling-stroke"/><line x1="27" y1="338" x2="1900" y2="338" stroke="#eaeaea" stroke-width="1" vector-effect="non-scaling-stroke"/><line x1="27" y1="493" x2="1900" y2="493" stroke="#eaeaea" stroke-width="1" vector-effect="non-scaling-stroke"/><rect x="27" y="30" width="1873" height="615" fill="none" stroke="#7f7f7f" stroke-width="1.7" vector-effect="non-scaling-stroke"/><polyline points="30,645 58,645 58,-200 75,-200 75,245 88,245 88,275 100,275 100,238 118,238 118,278 245,278 245,285 280,285 280,645 508,645 508,165 522,165 522,275 540,275 540,270 585,270 585,278 695,278 695,285 740,285 740,645 970,645 970,-200 990,-200 990,105 1000,105 1000,245 1015,245 1015,275 1042,275 1042,215 1058,215 1058,278 1160,278 1160,285 1205,285 1205,645 1435,645 1435,80 1445,80 1445,70 1452,70 1452,-200 1462,-200 1462,120 1468,120 1468,-200 1478,-200 1478,270 1505,270 1505,278 1625,278 1625,285 1665,285 1665,645 1885,645" fill="none" stroke="#5252ff" stroke-width="1.0" vector-effect="non-scaling-stroke" clip-path="url(#cp1)"/></svg>
<div style="position:absolute;left:290.5px;top:382.5px;width:87px;height:16px;background:rgba(255,255,255,0.12)"></div>
<div style="position:absolute;left:292.2px;top:384.2px;width:14.5px;height:11.5px;box-sizing:border-box;border:1px solid #c8c8c8;background:#fff"></div>
<div style="position:absolute;left:294.2px;top:386.2px;width:10.5px;height:7.5px;background:#0000ff"></div>
<div style="position:absolute;left:310.30px;top:384.69px;white-space:nowrap;font-family:'Liberation Serif', serif;font-weight:normal;font-size:11px;line-height:11px;color:#8c8c8c;transform:scaleX(1.2484);transform-origin:0 0;">aida01 Rate</div>
<svg style="position:absolute;left:368.9px;top:366.1px" width="21" height="21" viewBox="0 0 21 21"><path d="M10.5 0.5L20.5 10.5L10.5 20.5L0.5 10.5Z" fill="#ff0000"/></svg>
<div style="position:absolute;left:95.65px;top:371.17px;white-space:nowrap;font-family:'Liberation Serif', serif;font-weight:normal;font-size:12.2px;line-height:12.2px;color:#505050;transform:scaleX(1.1066);transform-origin:0 0;">100</div>
<div style="position:absolute;left:102.40px;top:392.62px;white-space:nowrap;font-family:'Liberation Serif', serif;font-weight:normal;font-size:12.2px;line-height:12.2px;color:#505050;transform:scaleX(1.1066);transform-origin:0 0;">75</div>
<div style="position:absolute;left:102.40px;top:413.71px;white-space:nowrap;font-family:'Liberation Serif', serif;font-weight:normal;font-size:12.2px;line-height:12.2px;color:#505050;transform:scaleX(1.1066);transform-origin:0 0;">50</div>
<div style="position:absolute;left:102.40px;top:435.51px;white-space:nowrap;font-family:'Liberation Serif', serif;font-weight:normal;font-size:12.2px;line-height:12.2px;color:#505050;transform:scaleX(1.1066);transform-origin:0 0;">25</div>
<div style="position:absolute;left:109.15px;top:456.89px;white-space:nowrap;font-family:'Liberation Serif', serif;font-weight:normal;font-size:12.2px;line-height:12.2px;color:#505050;transform:scaleX(1.1066);transform-origin:0 0;">0</div>
<div style="position:absolute;left:116.05px;top:467.13px;white-space:nowrap;font-family:'Liberation Serif', serif;font-weight:normal;font-size:12.2px;line-height:12.2px;color:#505050;transform:scaleX(1.1066);transform-origin:0 0;">0</div>
<div style="position:absolute;left:153.53px;top:467.13px;white-space:nowrap;font-family:'Liberation Serif', serif;font-weight:normal;font-size:12.2px;line-height:12.2px;color:#505050;transform:scaleX(1.1066);transform-origin:0 0;">20</div>
<div style="position:absolute;left:194.03px;top:467.13px;white-space:nowrap;font-family:'Liberation Serif', serif;font-weight:normal;font-size:12.2px;line-height:12.2px;color:#505050;transform:scaleX(1.1066);transform-origin:0 0;">40</div>
<div style="position:absolute;left:234.81px;top:467.13px;white-space:nowrap;font-family:'Liberation Serif', serif;font-weight:normal;font-size:12.2px;line-height:12.2px;color:#505050;transform:scaleX(1.1066);transform-origin:0 0;">60</div>
<div style="position:absolute;left:275.59px;top:467.13px;white-space:nowrap;font-family:'Liberation Serif', serif;font-weight:normal;font-size:12.2px;line-height:12.2px;color:#505050;transform:scaleX(1.1066);transform-origin:0 0;">80</div>
<div style="position:absolute;left:313.00px;top:467.13px;white-space:nowrap;font-family:'Liberation Serif', serif;font-weight:normal;font-size:12.2px;line-height:12.2px;color:#505050;transform:scaleX(1.1066);transform-origin:0 0;">100</div>
<div style="position:absolute;left:354.48px;top:467.13px;white-space:nowrap;font-family:'Liberation Serif', serif;font-weight:normal;font-size:12.2px;line-height:12.2px;color:#505050;transform:scaleX(1.1066);transform-origin:0 0;">120</div>
<svg style="position:absolute;left:591px;top:372px" width="270" height="94" viewBox="0 0 1920 668.44" preserveAspectRatio="none"><defs><clipPath id="cp2"><rect x="27" y="37" width="1873" height="620"/></clipPath></defs><line x1="322" y1="30" x2="322" y2="645" stroke="#eaeaea" stroke-width="1" vector-effect="non-scaling-stroke"/><line x1="610" y1="30" x2="610" y2="645" stroke="#eaeaea" stroke-width="1" vector-effect="non-scaling-stroke"/><line x1="900" y1="30" x2="900" y2="645" stroke="#eaeaea" stroke-width="1" vector-effect="non-scaling-stroke"/><line x1="1190" y1="30" x2="1190" y2="645" stroke="#eaeaea" stroke-width="1" vector-effect="non-scaling-stroke"/><line x1="1480" y1="30" x2="1480" y2="645" stroke="#eaeaea" stroke-width="1" vector-effect="non-scaling-stroke"/><line x1="1775" y1="30" x2="1775" y2="645" stroke="#eaeaea" stroke-width="1" vector-effect="non-scaling-stroke"/><line x1="27" y1="188" x2="1900" y2="188" stroke="#eaeaea" stroke-width="1" vector-effect="non-scaling-stroke"/><line x1="27" y1="338" x2="1900" y2="338" stroke="#eaeaea" stroke-width="1" vector-effect="non-scaling-stroke"/><line x1="27" y1="493" x2="1900" y2="493" stroke="#eaeaea" stroke-width="1" vector-effect="non-scaling-stroke"/><rect x="27" y="30" width="1873" height="615" fill="none" stroke="#7f7f7f" stroke-width="1.7" vector-effect="non-scaling-stroke"/><polyline points="30,645 45,645 45,158 65,158 65,165 75,165 75,358 90,358 90,400 105,400 105,388 120,388 120,400 280,400 280,645 508,645 508,158 522,158 522,400 540,400 540,352 552,352 552,242 568,242 568,338 582,338 582,400 598,400 598,388 612,388 612,400 740,400 740,645 970,645 970,210 985,210 985,162 1000,162 1000,335 1025,335 1025,345 1032,345 1032,400 1045,400 1045,368 1060,368 1060,385 1075,385 1075,400 1205,400 1205,645 1435,645 1435,162 1470,162 1470,158 1485,158 1485,168 1498,168 1498,158 1508,158 1508,400 1522,400 1522,238 1535,238 1535,385 1565,385 1565,400 1665,400 1665,645 1885,645" fill="none" stroke="#5252ff" stroke-width="1.0" vector-effect="non-scaling-stroke" clip-path="url(#cp2)"/></svg>
<div style="position:absolute;left:766.5px;top:382.5px;width:87px;height:16px;background:rgba(255,255,255,0.12)"></div>
<div style="position:absolute;left:768.2px;top:384.2px;width:14.5px;height:11.5px;box-sizing:border-box;border:1px solid #c8c8c8;background:#fff"></div>
<div style="position:absolute;left:770.2px;top:386.2px;width:10.5px;height:7.5px;background:#0000ff"></div>
<div style="position:absolute;left:786.30px;top:384.69px;white-space:nowrap;font-family:'Liberation Serif', serif;font-weight:normal;font-size:11px;line-height:11px;color:#8c8c8c;transform:scaleX(1.2484);transform-origin:0 0;">aida02 Rate</div>
<svg style="position:absolute;left:844.9px;top:366.1px" width="21" height="21" viewBox="0 0 21 21"><path d="M10.5 0.5L20.5 10.5L10.5 20.5L0.5 10.5Z" fill="#ff0000"/></svg>
<div style="position:absolute;left:571.65px;top:371.17px;white-space:nowrap;font-family:'Liberation Serif', serif;font-weight:normal;font-size:12.2px;line-height:12.2px;color:#505050;transform:scaleX(1.1066);transform-origin:0 0;">100</div>
<div style="position:absolute;left:578.40px;top:392.62px;white-space:nowrap;font-family:'Liberation Serif', serif;font-weight:normal;font-size:12.2px;line-height:12.2px;color:#505050;transform:scaleX(1.1066);transform-origin:0 0;">75</div>
<div style="position:absolute;left:578.40px;top:413.71px;white-space:nowrap;font-family:'Liberation Serif', serif;font-weight:normal;font-size:12.2px;line-height:12.2px;color:#505050;transform:scaleX(1.1066);transform-origin:0 0;">50</div>
<div style="position:absolute;left:578.40px;top:435.51px;white-space:nowrap;font-family:'Liberation Serif', serif;font-weight:normal;font-size:12.2px;line-height:12.2px;color:#505050;transform:scaleX(1.1066);transform-origin:0 0;">25</div>
<div style="position:absolute;left:585.15px;top:456.89px;white-space:nowrap;font-family:'Liberation Serif', serif;font-weight:normal;font-size:12.2px;line-height:12.2px;color:#505050;transform:scaleX(1.1066);transform-origin:0 0;">0</div>
<div style="position:absolute;left:592.05px;top:467.13px;white-space:nowrap;font-family:'Liberation Serif', serif;font-weight:normal;font-size:12.2px;line-height:12.2px;color:#505050;transform:scaleX(1.1066);transform-origin:0 0;">0</div>
<div style="position:absolute;left:629.53px;top:467.13px;white-space:nowrap;font-family:'Liberation Serif', serif;font-weight:normal;font-size:12.2px;line-height:12.2px;color:#505050;transform:scaleX(1.1066);transform-origin:0 0;">20</div>
<div style="position:absolute;left:670.03px;top:467.13px;white-space:nowrap;font-family:'Liberation Serif', serif;font-weight:normal;font-size:12.2px;line-height:12.2px;color:#505050;transform:scaleX(1.1066);transform-origin:0 0;">40</div>
<div style="position:absolute;left:710.81px;top:467.13px;white-space:nowrap;font-family:'Liberation Serif', serif;font-weight:normal;font-size:12.2px;line-height:12.2px;color:#505050;transform:scaleX(1.1066);transform-origin:0 0;">60</div>
<div style="position:absolute;left:751.59px;top:467.13px;white-space:nowrap;font-family:'Liberation Serif', serif;font-weight:normal;font-size:12.2px;line-height:12.2px;color:#505050;transform:scaleX(1.1066);transform-origin:0 0;">80</div>
<div style="position:absolute;left:789.00px;top:467.13px;white-space:nowrap;font-family:'Liberation Serif', serif;font-weight:normal;font-size:12.2px;line-height:12.2px;color:#505050;transform:scaleX(1.1066);transform-origin:0 0;">100</div>
<div style="position:absolute;left:830.48px;top:467.13px;white-space:nowrap;font-family:'Liberation Serif', serif;font-weight:normal;font-size:12.2px;line-height:12.2px;color:#505050;transform:scaleX(1.1066);transform-origin:0 0;">120</div>
<svg style="position:absolute;left:1067px;top:372px" width="270" height="94" viewBox="0 0 1920 668.44" preserveAspectRatio="none"><defs><clipPath id="cp3"><rect x="27" y="37" width="1873" height="620"/></clipPath></defs><line x1="322" y1="30" x2="322" y2="645" stroke="#eaeaea" stroke-width="1" vector-effect="non-scaling-stroke"/><line x1="610" y1="30" x2="610" y2="645" stroke="#eaeaea" stroke-width="1" vector-effect="non-scaling-stroke"/><line x1="900" y1="30" x2="900" y2="645" stroke="#eaeaea" stroke-width="1" vector-effect="non-scaling-stroke"/><line x1="1190" y1="30" x2="1190" y2="645" stroke="#eaeaea" stroke-width="1" vector-effect="non-scaling-stroke"/><line x1="1480" y1="30" x2="1480" y2="645" stroke="#eaeaea" stroke-width="1" vector-effect="non-scaling-stroke"/><line x1="1775" y1="30" x2="1775" y2="645" stroke="#eaeaea" stroke-width="1" vector-effect="non-scaling-stroke"/><line x1="27" y1="188" x2="1900" y2="188" stroke="#eaeaea" stroke-width="1" vector-effect="non-scaling-stroke"/><line x1="27" y1="338" x2="1900" y2="338" stroke="#eaeaea" stroke-width="1" vector-effect="non-scaling-stroke"/><line x1="27" y1="493" x2="1900" y2="493" stroke="#eaeaea" stroke-width="1" vector-effect="non-scaling-stroke"/><rect x="27" y="30" width="1873" height="615" fill="none" stroke="#7f7f7f" stroke-width="1.7" vector-effect="non-scaling-stroke"/><polyline points="30,645 45,645 45,-200 280,-200 280,645 508,645 508,-200 668,-200 668,80 685,80 685,-200 698,-200 698,95 712,95 712,195 725,195 725,310 740,310 740,645 970,645 970,-200 1045,-200 1045,60 1060,60 1060,100 1075,100 1075,135 1090,135 1090,-200 1118,-200 1118,170 1130,170 1130,145 1148,145 1148,178 1162,178 1162,-200 1172,-200 1172,235 1190,235 1190,318 1205,318 1205,645 1435,645 1435,-200 1538,-200 1538,200 1552,200 1552,-200 1595,-200 1595,205 1610,205 1610,-200 1635,-200 1635,235 1652,235 1652,285 1665,285 1665,645 1885,645" fill="none" stroke="#5252ff" stroke-width="1.0" vector-effect="non-scaling-stroke" clip-path="url(#cp3)"/></svg>
<div style="position:absolute;left:1242.5px;top:382.5px;width:87px;height:16px;background:rgba(255,255,255,0.12)"></div>
<div style="position:absolute;left:1244.2px;top:384.2px;width:14.5px;height:11.5px;box-sizing:border-box;border:1px solid #c8c8c8;background:#fff"></div>
<div style="position:absolute;left:1246.2px;top:386.2px;width:10.5px;height:7.5px;background:#0000ff"></div>
<div style="position:absolute;left:1262.30px;top:384.69px;white-space:nowrap;font-family:'Liberation Serif', serif;font-weight:normal;font-size:11px;line-height:11px;color:#8c8c8c;transform:scaleX(1.2484);transform-origin:0 0;">aida03 Rate</div>
<svg style="position:absolute;left:1320.9px;top:366.1px" width="21" height="21" viewBox="0 0 21 21"><path d="M10.5 0.5L20.5 10.5L10.5 20.5L0.5 10.5Z" fill="#ff0000"/></svg>
<div style="position:absolute;left:1047.65px;top:371.17px;white-space:nowrap;font-family:'Liberation Serif', serif;font-weight:normal;font-size:12.2px;line-height:12.2px;color:#505050;transform:scaleX(1.1066);transform-origin:0 0;">100</div>
<div style="position:absolute;left:1054.40px;top:392.62px;white-space:nowrap;font-family:'Liberation Serif', serif;font-weight:normal;font-size:12.2px;line-height:12.2px;color:#505050;transform:scaleX(1.1066);transform-origin:0 0;">75</div>
<div style="position:absolute;left:1054.40px;top:413.71px;white-space:nowrap;font-family:'Liberation Serif', serif;font-weight:normal;font-size:12.2px;line-height:12.2px;color:#505050;transform:scaleX(1.1066);transform-origin:0 0;">50</div>
<div style="position:absolute;left:1054.40px;top:435.51px;white-space:nowrap;font-family:'Liberation Serif', serif;font-weight:normal;font-size:12.2px;line-height:12.2px;color:#505050;transform:scaleX(1.1066);transform-origin:0 0;">25</div>
<div style="position:absolute;left:1061.15px;top:456.89px;white-space:nowrap;font-family:'Liberation Serif', serif;font-weight:normal;font-size:12.2px;line-height:12.2px;color:#505050;transform:scaleX(1.1066);transform-origin:0 0;">0</div>
<div style="position:absolute;left:1068.05px;top:467.13px;white-space:nowrap;font-family:'Liberation Serif', serif;font-weight:normal;font-size:12.2px;line-height:12.2px;color:#505050;transform:scaleX(1.1066);transform-origin:0 0;">0</div>
<div style="position:absolute;left:1105.53px;top:467.13px;white-space:nowrap;font-family:'Liberation Serif', serif;font-weight:normal;font-size:12.2px;line-height:12.2px;color:#505050;transform:scaleX(1.1066);transform-origin:0 0;">20</div>
<div style="position:absolute;left:1146.03px;top:467.13px;white-space:nowrap;font-family:'Liberation Serif', serif;font-weight:normal;font-size:12.2px;line-height:12.2px;color:#505050;transform:scaleX(1.1066);transform-origin:0 0;">40</div>
<div style="position:absolute;left:1186.81px;top:467.13px;white-space:nowrap;font-family:'Liberation Serif', serif;font-weight:normal;font-size:12.2px;line-height:12.2px;color:#505050;transform:scaleX(1.1066);transform-origin:0 0;">60</div>
<div style="position:absolute;left:1227.59px;top:467.13px;white-space:nowrap;font-family:'Liberation Serif', serif;font-weight:normal;font-size:12.2px;line-height:12.2px;color:#505050;transform:scaleX(1.1066);transform-origin:0 0;">80</div>
<div style="position:absolute;left:1265.00px;top:467.13px;white-space:nowrap;font-family:'Liberation Serif', serif;font-weight:normal;font-size:12.2px;line-height:12.2px;color:#505050;transform:scaleX(1.1066);transform-origin:0 0;">100</div>
<div style="position:absolute;left:1306.48px;top:467.13px;white-space:nowrap;font-family:'Liberation Serif', serif;font-weight:normal;font-size:12.2px;line-height:12.2px;color:#505050;transform:scaleX(1.1066);transform-origin:0 0;">120</div>
<svg style="position:absolute;left:1543px;top:372px" width="270" height="94" viewBox="0 0 1920 668.44" preserveAspectRatio="none"><defs><clipPath id="cp4"><rect x="27" y="37" width="1873" height="620"/></clipPath></defs><line x1="322" y1="30" x2="322" y2="645" stroke="#eaeaea" stroke-width="1" vector-effect="non-scaling-stroke"/><line x1="610" y1="30" x2="610" y2="645" stroke="#eaeaea" stroke-width="1" vector-effect="non-scaling-stroke"/><line x1="900" y1="30" x2="900" y2="645" stroke="#eaeaea" stroke-width="1" vector-effect="non-scaling-stroke"/><line x1="1190" y1="30" x2="1190" y2="645" stroke="#eaeaea" stroke-width="1" vector-effect="non-scaling-stroke"/><line x1="1480" y1="30" x2="1480" y2="645" stroke="#eaeaea" stroke-width="1" vector-effect="non-scaling-stroke"/><line x1="1775" y1="30" x2="1775" y2="645" stroke="#eaeaea" stroke-width="1" vector-effect="non-scaling-stroke"/><line x1="27" y1="188" x2="1900" y2="188" stroke="#eaeaea" stroke-width="1" vector-effect="non-scaling-stroke"/><line x1="27" y1="338" x2="1900" y2="338" stroke="#eaeaea" stroke-width="1" vector-effect="non-scaling-stroke"/><line x1="27" y1="493" x2="1900" y2="493" stroke="#eaeaea" stroke-width="1" vector-effect="non-scaling-stroke"/><rect x="27" y="30" width="1873" height="615" fill="none" stroke="#7f7f7f" stroke-width="1.7" vector-effect="non-scaling-stroke"/><polyline points="30,645 45,645 45,-200 232,-200 232,170 245,170 245,195 262,195 262,-200 272,-200 272,-200 280,-200 280,645 508,645 508,-200 652,-200 652,180 668,180 668,-200 740,-200 740,645 970,645 970,-200 1205,-200 1205,645 1435,645 1435,-200 1665,-200 1665,645 1885,645" fill="none" stroke="#5252ff" stroke-width="1.0" vector-effect="non-scaling-stroke" clip-path="url(#cp4)"/></svg>
<div style="position:absolute;left:1718.5px;top:382.5px;width:87px;height:16px;background:rgba(255,255,255,0.12)"></div>
<div style="position:absolute;left:1720.2px;top:384.2px;width:14.5px;height:11.5px;box-sizing:border-box;border:1px solid #c8c8c8;background:#fff"></div>
<div style="position:absolute;left:1722.2px;top:386.2px;width:10.5px;height:7.5px;background:#0000ff"></div>
<div style="position:absolute;left:1738.30px;top:384.69px;white-space:nowrap;font-family:'Liberation Serif', serif;font-weight:normal;font-size:11px;line-height:11px;color:#8c8c8c;transform:scaleX(1.2484);transform-origin:0 0;">aida04 Rate</div>
<svg style="position:absolute;left:1796.9px;top:366.1px" width="21" height="21" viewBox="0 0 21 21"><path d="M10.5 0.5L20.5 10.5L10.5 20.5L0.5 10.5Z" fill="#ff0000"/></svg>
<div style="position:absolute;left:1523.65px;top:371.17px;white-space:nowrap;font-family:'Liberation Serif', serif;font-weight:normal;font-size:12.2px;line-height:12.2px;color:#505050;transform:scaleX(1.1066);transform-origin:0 0;">100</div>
<div style="position:absolute;left:1530.40px;top:392.62px;white-space:nowrap;font-family:'Liberation Serif', serif;font-weight:normal;font-size:12.2px;line-height:12.2px;color:#505050;transform:scaleX(1.1066);transform-origin:0 0;">75</div>
<div style="position:absolute;left:1530.40px;top:413.71px;white-space:nowrap;font-family:'Liberation Serif', serif;font-weight:normal;font-size:12.2px;line-height:12.2px;color:#505050;transform:scaleX(1.1066);transform-origin:0 0;">50</div>
<div style="position:absolute;left:1530.40px;top:435.51px;white-space:nowrap;font-family:'Liberation Serif', serif;font-weight:normal;font-size:12.2px;line-height:12.2px;color:#505050;transform:scaleX(1.1066);transform-origin:0 0;">25</div>
<div style="position:absolute;left:1537.15px;top:456.89px;white-space:nowrap;font-family:'Liberation Serif', serif;font-weight:normal;font-size:12.2px;line-height:12.2px;color:#505050;transform:scaleX(1.1066);transform-origin:0 0;">0</div>
<div style="position:absolute;left:1544.05px;top:467.13px;white-space:nowrap;font-family:'Liberation Serif', serif;font-weight:normal;font-size:12.2px;line-height:12.2px;color:#505050;transform:scaleX(1.1066);transform-origin:0 0;">0</div>
<div style="position:absolute;left:1581.53px;top:467.13px;white-space:nowrap;font-family:'Liberation Serif', serif;font-weight:normal;font-size:12.2px;line-height:12.2px;color:#505050;transform:scaleX(1.1066);transform-origin:0 0;">20</div>
<div style="position:absolute;left:1622.03px;top:467.13px;white-space:nowrap;font-family:'Liberation Serif', serif;font-weight:normal;font-size:12.2px;line-height:12.2px;color:#505050;transform:scaleX(1.1066);transform-origin:0 0;">40</div>
<div style="position:absolute;left:1662.81px;top:467.13px;white-space:nowrap;font-family:'Liberation Serif', serif;font-weight:normal;font-size:12.2px;line-height:12.2px;color:#505050;transform:scaleX(1.1066);transform-origin:0 0;">60</div>
<div style="position:absolute;left:1703.59px;top:467.13px;white-space:nowrap;font-family:'Liberation Serif', serif;font-weight:normal;font-size:12.2px;line-height:12.2px;color:#505050;transform:scaleX(1.1066);transform-origin:0 0;">80</div>
<div style="position:absolute;left:1741.00px;top:467.13px;white-space:nowrap;font-family:'Liberation Serif', serif;font-weight:normal;font-size:12.2px;line-height:12.2px;color:#505050;transform:scaleX(1.1066);transform-origin:0 0;">100</div>
<div style="position:absolute;left:1782.48px;top:467.13px;white-space:nowrap;font-family:'Liberation Serif', serif;font-weight:normal;font-size:12.2px;line-height:12.2px;color:#505050;transform:scaleX(1.1066);transform-origin:0 0;">120</div>
<svg style="position:absolute;left:115px;top:494px" width="270" height="94" viewBox="0 0 1920 668.44" preserveAspectRatio="none"><defs><clipPath id="cp5"><rect x="27" y="37" width="1873" height="620"/></clipPath></defs><line x1="322" y1="30" x2="322" y2="645" stroke="#eaeaea" stroke-width="1" vector-effect="non-scaling-stroke"/><line x1="610" y1="30" x2="610" y2="645" stroke="#eaeaea" stroke-width="1" vector-effect="non-scaling-stroke"/><line x1="900" y1="30" x2="900" y2="645" stroke="#eaeaea" stroke-width="1" vector-effect="non-scaling-stroke"/><line x1="1190" y1="30" x2="1190" y2="645" stroke="#eaeaea" stroke-width="1" vector-effect="non-scaling-stroke"/><line x1="1480" y1="30" x2="1480" y2="645" stroke="#eaeaea" stroke-width="1" vector-effect="non-scaling-stroke"/><line x1="1775" y1="30" x2="1775" y2="645" stroke="#eaeaea" stroke-width="1" vector-effect="non-scaling-stroke"/><line x1="27" y1="188" x2="1900" y2="188" stroke="#eaeaea" stroke-width="1" vector-effect="non-scaling-stroke"/><line x1="27" y1="338" x2="1900" y2="338" stroke="#eaeaea" stroke-width="1" vector-effect="non-scaling-stroke"/><line x1="27" y1="493" x2="1900" y2="493" stroke="#eaeaea" stroke-width="1" vector-effect="non-scaling-stroke"/><rect x="27" y="30" width="1873" height="615" fill="none" stroke="#7f7f7f" stroke-width="1.7" vector-effect="non-scaling-stroke"/><polyline points="30,645 72,645 72,-200 80,-200 80,645 103,645 103,-200 110,-200 110,645 118,645 118,-200 122,-200 122,645 175,645 175,-200 178,-200 178,165 190,165 190,150 205,150 205,645 215,645 215,-200 222,-200 222,645 228,645 228,-200 238,-200 238,278 280,278 280,645 508,645 508,-200 515,-200 515,645 535,645 535,-200 548,-200 548,645 555,645 555,-200 600,-200 600,278 610,278 610,200 625,200 625,278 635,278 635,645 642,645 642,278 650,278 650,645 655,645 655,278 740,278 740,645 985,645 985,-200 990,-200 990,645 1055,645 1055,-200 1065,-200 1065,265 1072,265 1072,645 1085,645 1085,-200 1090,-200 1090,645 1095,645 1095,-200 1105,-200 1105,135 1118,135 1118,278 1130,278 1130,262 1145,262 1145,278 1175,278 1175,645 1182,645 1182,278 1195,278 1195,278 1205,278 1205,645 1435,645 1435,278 1475,278 1475,-200 1480,-200 1480,645 1485,645 1485,-200 1498,-200 1498,278 1540,278 1540,270 1555,270 1555,278 1570,278 1570,270 1585,270 1585,278 1640,278 1640,645 1885,645" fill="none" stroke="#5252ff" stroke-width="1.0" vector-effect="non-scaling-stroke" clip-path="url(#cp5)"/></svg>
<div style="position:absolute;left:290.5px;top:504.5px;width:87px;height:16px;background:rgba(255,255,255,0.12)"></div>
<div style="position:absolute;left:292.2px;top:506.2px;width:14.5px;height:11.5px;box-sizing:border-box;border:1px solid #c8c8c8;background:#fff"></div>
<div style="position:absolute;left:294.2px;top:508.2px;width:10.5px;height:7.5px;background:#0000ff"></div>
<div style="position:absolute;left:310.30px;top:506.69px;white-space:nowrap;font-family:'Liberation Serif', serif;font-weight:normal;font-size:11px;line-height:11px;color:#8c8c8c;transform:scaleX(1.2484);transform-origin:0 0;">aida05 Rate</div>
<svg style="position:absolute;left:368.9px;top:488.1px" width="21" height="21" viewBox="0 0 21 21"><path d="M10.5 0.5L20.5 10.5L10.5 20.5L0.5 10.5Z" fill="#ff0000"/></svg>
<div style="position:absolute;left:95.65px;top:493.17px;white-space:nowrap;font-family:'Liberation Serif', serif;font-weight:normal;font-size:12.2px;line-height:12.2px;color:#505050;transform:scaleX(1.1066);transform-origin:0 0;">100</div>
<div style="position:absolute;left:102.40px;top:514.62px;white-space:nowrap;font-family:'Liberation Serif', serif;font-weight:normal;font-size:12.2px;line-height:12.2px;color:#505050;transform:scaleX(1.1066);transform-origin:0 0;">75</div>
<div style="position:absolute;left:102.40px;top:535.71px;white-space:nowrap;font-family:'Liberation Serif', serif;font-weight:normal;font-size:12.2px;line-height:12.2px;color:#505050;transform:scaleX(1.1066);transform-origin:0 0;">50</div>
<div style="position:absolute;left:102.40px;top:557.51px;white-space:nowrap;font-family:'Liberation Serif', serif;font-weight:normal;font-size:12.2px;line-height:12.2px;color:#505050;transform:scaleX(1.1066);transform-origin:0 0;">25</div>
<div style="position:absolute;left:109.15px;top:578.89px;white-space:nowrap;font-family:'Liberation Serif', serif;font-weight:normal;font-size:12.2px;line-height:12.2px;color:#505050;transform:scaleX(1.1066);transform-origin:0 0;">0</div>
<div style="position:absolute;left:116.05px;top:589.13px;white-space:nowrap;font-family:'Liberation Serif', serif;font-weight:normal;font-size:12.2px;line-height:12.2px;color:#505050;transform:scaleX(1.1066);transform-origin:0 0;">0</div>
<div style="position:absolute;left:153.53px;top:589.13px;white-space:nowrap;font-family:'Liberation Serif', serif;font-weight:normal;font-size:12.2px;line-height:12.2px;color:#505050;transform:scaleX(1.1066);transform-origin:0 0;">20</div>
<div style="position:absolute;left:194.03px;top:589.13px;white-space:nowrap;font-family:'Liberation Serif', serif;font-weight:normal;font-size:12.2px;line-height:12.2px;color:#505050;transform:scaleX(1.1066);transform-origin:0 0;">40</div>
<div style="position:absolute;left:234.81px;top:589.13px;white-space:nowrap;font-family:'Liberation Serif', serif;font-weight:normal;font-size:12.2px;line-height:12.2px;color:#505050;transform:scaleX(1.1066);transform-origin:0 0;">60</div>
<div style="position:absolute;left:275.59px;top:589.13px;white-space:nowrap;font-family:'Liberation Serif', serif;font-weight:normal;font-size:12.2px;line-height:12.2px;color:#505050;transform:scaleX(1.1066);transform-origin:0 0;">80</div>
<div style="position:absolute;left:313.00px;top:589.13px;white-space:nowrap;font-family:'Liberation Serif', serif;font-weight:normal;font-size:12.2px;line-height:12.2px;color:#505050;transform:scaleX(1.1066);transform-origin:0 0;">100</div>
<div style="position:absolute;left:354.48px;top:589.13px;white-space:nowrap;font-family:'Liberation Serif', serif;font-weight:normal;font-size:12.2px;line-height:12.2px;color:#505050;transform:scaleX(1.1066);transform-origin:0 0;">120</div>
<svg style="position:absolute;left:591px;top:494px" width="270" height="94" viewBox="0 0 1920 668.44" preserveAspectRatio="none"><defs><clipPath id="cp6"><rect x="27" y="37" width="1873" height="620"/></clipPath></defs><line x1="322" y1="30" x2="322" y2="645" stroke="#eaeaea" stroke-width="1" vector-effect="non-scaling-stroke"/><line x1="610" y1="30" x2="610" y2="645" stroke="#eaeaea" stroke-width="1" vector-effect="non-scaling-stroke"/><line x1="900" y1="30" x2="900" y2="645" stroke="#eaeaea" stroke-width="1" vector-effect="non-scaling-stroke"/><line x1="1190" y1="30" x2="1190" y2="645" stroke="#eaeaea" stroke-width="1" vector-effect="non-scaling-stroke"/><line x1="1480" y1="30" x2="1480" y2="645" stroke="#eaeaea" stroke-width="1" vector-effect="non-scaling-stroke"/><line x1="1775" y1="30" x2="1775" y2="645" stroke="#eaeaea" stroke-width="1" vector-effect="non-scaling-stroke"/><line x1="27" y1="188" x2="1900" y2="188" stroke="#eaeaea" stroke-width="1" vector-effect="non-scaling-stroke"/><line x1="27" y1="338" x2="1900" y2="338" stroke="#eaeaea" stroke-width="1" vector-effect="non-scaling-stroke"/><line x1="27" y1="493" x2="1900" y2="493" stroke="#eaeaea" stroke-width="1" vector-effect="non-scaling-stroke"/><rect x="27" y="30" width="1873" height="615" fill="none" stroke="#7f7f7f" stroke-width="1.7" vector-effect="non-scaling-stroke"/><polyline points="30,645 45,645 45,-200 60,-200 60,240 75,240 75,215 90,215 90,250 105,250 105,-200 120,-200 120,278 135,278 135,272 150,272 150,278 280,278 280,645 508,645 508,278 520,278 520,205 538,205 538,245 552,245 552,278 740,278 740,645 970,645 970,-200 985,-200 985,278 1030,278 1030,260 1045,260 1045,278 1060,278 1060,270 1075,270 1075,278 1205,278 1205,645 1435,645 1435,-200 1450,-200 1450,278 1462,278 1462,60 1478,60 1478,278 1485,278 1485,-200 1492,-200 1492,165 1500,165 1500,278 1503,278 1503,165 1508,165 1508,278 1665,278 1665,645 1885,645" fill="none" stroke="#5252ff" stroke-width="1.0" vector-effect="non-scaling-stroke" clip-path="url(#cp6)"/></svg>
<div style="position:absolute;left:766.5px;top:504.5px;width:87px;height:16px;background:rgba(255,255,255,0.12)"></div>
<div style="position:absolute;left:768.2px;top:506.2px;width:14.5px;height:11.5px;box-sizing:border-box;border:1px solid #c8c8c8;background:#fff"></div>
<div style="position:absolute;left:770.2px;top:508.2px;width:10.5px;height:7.5px;background:#0000ff"></div>
<div style="position:absolute;left:786.30px;top:506.69px;white-space:nowrap;font-family:'Liberation Serif', serif;font-weight:normal;font-size:11px;line-height:11px;color:#8c8c8c;transform:scaleX(1.2484);transform-origin:0 0;">aida06 Rate</div>
<svg style="position:absolute;left:844.9px;top:488.1px" width="21" height="21" viewBox="0 0 21 21"><path d="M10.5 0.5L20.5 10.5L10.5 20.5L0.5 10.5Z" fill="#ff0000"/></svg>
<div style="position:absolute;left:571.65px;top:493.17px;white-space:nowrap;font-family:'Liberation Serif', serif;font-weight:normal;font-size:12.2px;line-height:12.2px;color:#505050;transform:scaleX(1.1066);transform-origin:0 0;">100</div>
<div style="position:absolute;left:578.40px;top:514.62px;white-space:nowrap;font-family:'Liberation Serif', serif;font-weight:normal;font-size:12.2px;line-height:12.2px;color:#505050;transform:scaleX(1.1066);transform-origin:0 0;">75</div>
<div style="position:absolute;left:578.40px;top:535.71px;white-space:nowrap;font-family:'Liberation Serif', serif;font-weight:normal;font-size:12.2px;line-height:12.2px;color:#505050;transform:scaleX(1.1066);transform-origin:0 0;">50</div>
<div style="position:absolute;left:578.40px;top:557.51px;white-space:nowrap;font-family:'Liberation Serif', serif;font-weight:normal;font-size:12.2px;line-height:12.2px;color:#505050;transform:scaleX(1.1066);transform-origin:0 0;">25</div>
<div style="position:absolute;left:585.15px;top:578.89px;white-space:nowrap;font-family:'Liberation Serif', serif;font-weight:normal;font-size:12.2px;line-height:12.2px;color:#505050;transform:scaleX(1.1066);transform-origin:0 0;">0</div>
<div style="position:absolute;left:592.05px;top:589.13px;white-space:nowrap;font-family:'Liberation Serif', serif;font-weight:normal;font-size:12.2px;line-height:12.2px;color:#505050;transform:scaleX(1.1066);transform-origin:0 0;">0</div>
<div style="position:absolute;left:629.53px;top:589.13px;white-space:nowrap;font-family:'Liberation Serif', serif;font-weight:normal;font-size:12.2px;line-height:12.2px;color:#505050;transform:scaleX(1.1066);transform-origin:0 0;">20</div>
<div style="position:absolute;left:670.03px;top:589.13px;white-space:nowrap;font-family:'Liberation Serif', serif;font-weight:normal;font-size:12.2px;line-height:12.2px;color:#505050;transform:scaleX(1.1066);transform-origin:0 0;">40</div>
<div style="position:absolute;left:710.81px;top:589.13px;white-space:nowrap;font-family:'Liberation Serif', serif;font-weight:normal;font-size:12.2px;line-height:12.2px;color:#505050;transform:scaleX(1.1066);transform-origin:0 0;">60</div>
<div style="position:absolute;left:751.59px;top:589.13px;white-space:nowrap;font-family:'Liberation Serif', serif;font-weight:normal;font-size:12.2px;line-height:12.2px;color:#505050;transform:scaleX(1.1066);transform-origin:0 0;">80</div>
<div style="position:absolute;left:789.00px;top:589.13px;white-space:nowrap;font-family:'Liberation Serif', serif;font-weight:normal;font-size:12.2px;line-height:12.2px;color:#505050;transform:scaleX(1.1066);transform-origin:0 0;">100</div>
<div style="position:absolute;left:830.48px;top:589.13px;white-space:nowrap;font-family:'Liberation Serif', serif;font-weight:normal;font-size:12.2px;line-height:12.2px;color:#505050;transform:scaleX(1.1066);transform-origin:0 0;">120</div>
<svg style="position:absolute;left:1067px;top:494px" width="270" height="94" viewBox="0 0 1920 668.44" preserveAspectRatio="none"><defs><clipPath id="cp7"><rect x="27" y="37" width="1873" height="620"/></clipPath></defs><line x1="322" y1="30" x2="322" y2="645" stroke="#eaeaea" stroke-width="1" vector-effect="non-scaling-stroke"/><line x1="610" y1="30" x2="610" y2="645" stroke="#eaeaea" stroke-width="1" vector-effect="non-scaling-stroke"/><line x1="900" y1="30" x2="900" y2="645" stroke="#eaeaea" stroke-width="1" vector-effect="non-scaling-stroke"/><line x1="1190" y1="30" x2="1190" y2="645" stroke="#eaeaea" stroke-width="1" vector-effect="non-scaling-stroke"/><line x1="1480" y1="30" x2="1480" y2="645" stroke="#eaeaea" stroke-width="1" vector-effect="non-scaling-stroke"/><line x1="1775" y1="30" x2="1775" y2="645" stroke="#eaeaea" stroke-width="1" vector-effect="non-scaling-stroke"/><line x1="27" y1="188" x2="1900" y2="188" stroke="#eaeaea" stroke-width="1" vector-effect="non-scaling-stroke"/><line x1="27" y1="338" x2="1900" y2="338" stroke="#eaeaea" stroke-width="1" vector-effect="non-scaling-stroke"/><line x1="27" y1="493" x2="1900" y2="493" stroke="#eaeaea" stroke-width="1" vector-effect="non-scaling-stroke"/><rect x="27" y="30" width="1873" height="615" fill="none" stroke="#7f7f7f" stroke-width="1.7" vector-effect="non-scaling-stroke"/><polyline points="30,645 45,645 45,155 145,155 145,200 160,200 160,155 175,155 175,220 190,220 190,235 205,235 205,248 230,248 230,242 240,242 240,248 280,248 280,645 508,645 508,155 550,155 550,72 565,72 565,250 580,250 580,385 600,385 600,392 615,392 615,385 628,385 628,400 740,400 740,645 970,645 970,155 985,155 985,205 1000,205 1000,175 1015,175 1015,235 1030,235 1030,155 1045,155 1045,300 1060,300 1060,365 1075,365 1075,385 1105,385 1105,400 1205,400 1205,645 1435,645 1435,155 1508,155 1508,285 1530,285 1530,300 1545,300 1545,285 1552,285 1552,400 1610,400 1610,310 1622,310 1622,400 1640,400 1640,295 1655,295 1655,400 1665,400 1665,645 1885,645" fill="none" stroke="#5252ff" stroke-width="1.0" vector-effect="non-scaling-stroke" clip-path="url(#cp7)"/></svg>
<div style="position:absolute;left:1242.5px;top:504.5px;width:87px;height:16px;background:rgba(255,255,255,0.12)"></div>
<div style="position:absolute;left:1244.2px;top:506.2px;width:14.5px;height:11.5px;box-sizing:border-box;border:1px solid #c8c8c8;background:#fff"></div>
<div style="position:absolute;left:1246.2px;top:508.2px;width:10.5px;height:7.5px;background:#0000ff"></div>
<div style="position:absolute;left:1262.30px;top:506.69px;white-space:nowrap;font-family:'Liberation Serif', serif;font-weight:normal;font-size:11px;line-height:11px;color:#8c8c8c;transform:scaleX(1.2484);transform-origin:0 0;">aida07 Rate</div>
<svg style="position:absolute;left:1320.9px;top:488.1px" width="21" height="21" viewBox="0 0 21 21"><path d="M10.5 0.5L20.5 10.5L10.5 20.5L0.5 10.5Z" fill="#ff0000"/></svg>
<div style="position:absolute;left:1047.65px;top:493.17px;white-space:nowrap;font-family:'Liberation Serif', serif;font-weight:normal;font-size:12.2px;line-height:12.2px;color:#505050;transform:scaleX(1.1066);transform-origin:0 0;">100</div>
<div style="position:absolute;left:1054.40px;top:514.62px;white-space:nowrap;font-family:'Liberation Serif', serif;font-weight:normal;font-size:12.2px;line-height:12.2px;color:#505050;transform:scaleX(1.1066);transform-origin:0 0;">75</div>
<div style="position:absolute;left:1054.40px;top:535.71px;white-space:nowrap;font-family:'Liberation Serif', serif;font-weight:normal;font-size:12.2px;line-height:12.2px;color:#505050;transform:scaleX(1.1066);transform-origin:0 0;">50</div>
<div style="position:absolute;left:1054.40px;top:557.51px;white-space:nowrap;font-family:'Liberation Serif', serif;font-weight:normal;font-size:12.2px;line-height:12.2px;color:#505050;transform:scaleX(1.1066);transform-origin:0 0;">25</div>
<div style="position:absolute;left:1061.15px;top:578.89px;white-space:nowrap;font-family:'Liberation Serif', serif;font-weight:normal;font-size:12.2px;line-height:12.2px;color:#505050;transform:scaleX(1.1066);transform-origin:0 0;">0</div>
<div style="position:absolute;left:1068.05px;top:589.13px;white-space:nowrap;font-family:'Liberation Serif', serif;font-weight:normal;font-size:12.2px;line-height:12.2px;color:#505050;transform:scaleX(1.1066);transform-origin:0 0;">0</div>
<div style="position:absolute;left:1105.53px;top:589.13px;white-space:nowrap;font-family:'Liberation Serif', serif;font-weight:normal;font-size:12.2px;line-height:12.2px;color:#505050;transform:scaleX(1.1066);transform-origin:0 0;">20</div>
<div style="position:absolute;left:1146.03px;top:589.13px;white-space:nowrap;font-family:'Liberation Serif', serif;font-weight:normal;font-size:12.2px;line-height:12.2px;color:#505050;transform:scaleX(1.1066);transform-origin:0 0;">40</div>
<div style="position:absolute;left:1186.81px;top:589.13px;white-space:nowrap;font-family:'Liberation Serif', serif;font-weight:normal;font-size:12.2px;line-height:12.2px;color:#505050;transform:scaleX(1.1066);transform-origin:0 0;">60</div>
<div style="position:absolute;left:1227.59px;top:589.13px;white-space:nowrap;font-family:'Liberation Serif', serif;font-weight:normal;font-size:12.2px;line-height:12.2px;color:#505050;transform:scaleX(1.1066);transform-origin:0 0;">80</div>
<div style="position:absolute;left:1265.00px;top:589.13px;white-space:nowrap;font-family:'Liberation Serif', serif;font-weight:normal;font-size:12.2px;line-height:12.2px;color:#505050;transform:scaleX(1.1066);transform-origin:0 0;">100</div>
<div style="position:absolute;left:1306.48px;top:589.13px;white-space:nowrap;font-family:'Liberation Serif', serif;font-weight:normal;font-size:12.2px;line-height:12.2px;color:#505050;transform:scaleX(1.1066);transform-origin:0 0;">120</div>
<svg style="position:absolute;left:1543px;top:494px" width="270" height="94" viewBox="0 0 1920 668.44" preserveAspectRatio="none"><defs><clipPath id="cp8"><rect x="27" y="37" width="1873" height="620"/></clipPath></defs><line x1="322" y1="30" x2="322" y2="645" stroke="#eaeaea" stroke-width="1" vector-effect="non-scaling-stroke"/><line x1="610" y1="30" x2="610" y2="645" stroke="#eaeaea" stroke-width="1" vector-effect="non-scaling-stroke"/><line x1="900" y1="30" x2="900" y2="645" stroke="#eaeaea" stroke-width="1" vector-effect="non-scaling-stroke"/><line x1="1190" y1="30" x2="1190" y2="645" stroke="#eaeaea" stroke-width="1" vector-effect="non-scaling-stroke"/><line x1="1480" y1="30" x2="1480" y2="645" stroke="#eaeaea" stroke-width="1" vector-effect="non-scaling-stroke"/><line x1="1775" y1="30" x2="1775" y2="645" stroke="#eaeaea" stroke-width="1" vector-effect="non-scaling-stroke"/><line x1="27" y1="188" x2="1900" y2="188" stroke="#eaeaea" stroke-width="1" vector-effect="non-scaling-stroke"/><line x1="27" y1="338" x2="1900" y2="338" stroke="#eaeaea" stroke-width="1" vector-effect="non-scaling-stroke"/><line x1="27" y1="493" x2="1900" y2="493" stroke="#eaeaea" stroke-width="1" vector-effect="non-scaling-stroke"/><rect x="27" y="30" width="1873" height="615" fill="none" stroke="#7f7f7f" stroke-width="1.7" vector-effect="non-scaling-stroke"/><polyline points="30,645 45,645 45,155 105,155 105,195 118,195 118,165 132,165 132,245 150,245 150,255 175,255 175,285 195,285 195,295 245,295 245,300 280,300 280,645 508,645 508,155 522,155 522,245 538,245 538,155 552,155 552,280 568,280 568,360 582,360 582,400 740,400 740,645 970,645 970,395 985,395 985,290 1000,290 1000,350 1015,350 1015,300 1030,300 1030,225 1045,225 1045,400 1205,400 1205,645 1435,645 1435,155 1450,155 1450,295 1465,295 1465,155 1485,155 1485,205 1500,205 1500,155 1508,155 1508,330 1525,330 1525,400 1545,400 1545,380 1565,380 1565,400 1665,400 1665,645 1885,645" fill="none" stroke="#5252ff" stroke-width="1.0" vector-effect="non-scaling-stroke" clip-path="url(#cp8)"/></svg>
<div style="position:absolute;left:1718.5px;top:504.5px;width:87px;height:16px;background:rgba(255,255,255,0.12)"></div>
<div style="position:absolute;left:1720.2px;top:506.2px;width:14.5px;height:11.5px;box-sizing:border-box;border:1px solid #c8c8c8;background:#fff"></div>
<div style="position:absolute;left:1722.2px;top:508.2px;width:10.5px;height:7.5px;background:#0000ff"></div>
<div style="position:absolute;left:1738.30px;top:506.69px;white-space:nowrap;font-family:'Liberation Serif', serif;font-weight:normal;font-size:11px;line-height:11px;color:#8c8c8c;transform:scaleX(1.2484);transform-origin:0 0;">aida08 Rate</div>
<svg style="position:absolute;left:1796.9px;top:488.1px" width="21" height="21" viewBox="0 0 21 21"><path d="M10.5 0.5L20.5 10.5L10.5 20.5L0.5 10.5Z" fill="#ff0000"/></svg>
<div style="position:absolute;left:1523.65px;top:493.17px;white-space:nowrap;font-family:'Liberation Serif', serif;font-weight:normal;font-size:12.2px;line-height:12.2px;color:#505050;transform:scaleX(1.1066);transform-origin:0 0;">100</div>
<div style="position:absolute;left:1530.40px;top:514.62px;white-space:nowrap;font-family:'Liberation Serif', serif;font-weight:normal;font-size:12.2px;line-height:12.2px;color:#505050;transform:scaleX(1.1066);transform-origin:0 0;">75</div>
<div style="position:absolute;left:1530.40px;top:535.71px;white-space:nowrap;font-family:'Liberation Serif', serif;font-weight:normal;font-size:12.2px;line-height:12.2px;color:#505050;transform:scaleX(1.1066);transform-origin:0 0;">50</div>
<div style="position:absolute;left:1530.40px;top:557.51px;white-space:nowrap;font-family:'Liberation Serif', serif;font-weight:normal;font-size:12.2px;line-height:12.2px;color:#505050;transform:scaleX(1.1066);transform-origin:0 0;">25</div>
<div style="position:absolute;left:1537.15px;top:578.89px;white-space:nowrap;font-family:'Liberation Serif', serif;font-weight:normal;font-size:12.2px;line-height:12.2px;color:#505050;transform:scaleX(1.1066);transform-origin:0 0;">0</div>
<div style="position:absolute;left:1544.05px;top:589.13px;white-space:nowrap;font-family:'Liberation Serif', serif;font-weight:normal;font-size:12.2px;line-height:12.2px;color:#505050;transform:scaleX(1.1066);transform-origin:0 0;">0</div>
<div style="position:absolute;left:1581.53px;top:589.13px;white-space:nowrap;font-family:'Liberation Serif', serif;font-weight:normal;font-size:12.2px;line-height:12.2px;color:#505050;transform:scaleX(1.1066);transform-origin:0 0;">20</div>
<div style="position:absolute;left:1622.03px;top:589.13px;white-space:nowrap;font-family:'Liberation Serif', serif;font-weight:normal;font-size:12.2px;line-height:12.2px;color:#505050;transform:scaleX(1.1066);transform-origin:0 0;">40</div>
<div style="position:absolute;left:1662.81px;top:589.13px;white-space:nowrap;font-family:'Liberation Serif', serif;font-weight:normal;font-size:12.2px;line-height:12.2px;color:#505050;transform:scaleX(1.1066);transform-origin:0 0;">60</div>
<div style="position:absolute;left:1703.59px;top:589.13px;white-space:nowrap;font-family:'Liberation Serif', serif;font-weight:normal;font-size:12.2px;line-height:12.2px;color:#505050;transform:scaleX(1.1066);transform-origin:0 0;">80</div>
<div style="position:absolute;left:1741.00px;top:589.13px;white-space:nowrap;font-family:'Liberation Serif', serif;font-weight:normal;font-size:12.2px;line-height:12.2px;color:#505050;transform:scaleX(1.1066);transform-origin:0 0;">100</div>
<div style="position:absolute;left:1782.48px;top:589.13px;white-space:nowrap;font-family:'Liberation Serif', serif;font-weight:normal;font-size:12.2px;line-height:12.2px;color:#505050;transform:scaleX(1.1066);transform-origin:0 0;">120</div>
<svg style="position:absolute;left:115px;top:616px" width="270" height="94" viewBox="0 0 1920 668.44" preserveAspectRatio="none"><defs><clipPath id="cp9"><rect x="27" y="37" width="1873" height="620"/></clipPath></defs><line x1="322" y1="30" x2="322" y2="645" stroke="#eaeaea" stroke-width="1" vector-effect="non-scaling-stroke"/><line x1="610" y1="30" x2="610" y2="645" stroke="#eaeaea" stroke-width="1" vector-effect="non-scaling-stroke"/><line x1="900" y1="30" x2="900" y2="645" stroke="#eaeaea" stroke-width="1" vector-effect="non-scaling-stroke"/><line x1="1190" y1="30" x2="1190" y2="645" stroke="#eaeaea" stroke-width="1" vector-effect="non-scaling-stroke"/><line x1="1480" y1="30" x2="1480" y2="645" stroke="#eaeaea" stroke-width="1" vector-effect="non-scaling-stroke"/><line x1="1775" y1="30" x2="1775" y2="645" stroke="#eaeaea" stroke-width="1" vector-effect="non-scaling-stroke"/><line x1="27" y1="188" x2="1900" y2="188" stroke="#eaeaea" stroke-width="1" vector-effect="non-scaling-stroke"/><line x1="27" y1="338" x2="1900" y2="338" stroke="#eaeaea" stroke-width="1" vector-effect="non-scaling-stroke"/><line x1="27" y1="493" x2="1900" y2="493" stroke="#eaeaea" stroke-width="1" vector-effect="non-scaling-stroke"/><rect x="27" y="30" width="1873" height="615" fill="none" stroke="#7f7f7f" stroke-width="1.7" vector-effect="non-scaling-stroke"/><polyline points="30,645 45,645 45,-200 280,-200 280,645 508,645 508,-200 740,-200 740,645 970,645 970,-200 1205,-200 1205,645 1435,645 1435,-200 1490,-200 1490,645 1497,645 1497,-200 1503,-200 1503,645 1508,645 1508,-200 1665,-200 1665,645 1885,645" fill="none" stroke="#5252ff" stroke-width="1.0" vector-effect="non-scaling-stroke" clip-path="url(#cp9)"/></svg>
<div style="position:absolute;left:290.5px;top:626.5px;width:87px;height:16px;background:rgba(255,255,255,0.12)"></div>
<div style="position:absolute;left:292.2px;top:628.2px;width:14.5px;height:11.5px;box-sizing:border-box;border:1px solid #c8c8c8;background:#fff"></div>
<div style="position:absolute;left:294.2px;top:630.2px;width:10.5px;height:7.5px;background:#0000ff"></div>
<div style="position:absolute;left:310.30px;top:628.69px;white-space:nowrap;font-family:'Liberation Serif', serif;font-weight:normal;font-size:11px;line-height:11px;color:#8c8c8c;transform:scaleX(1.2484);transform-origin:0 0;">aida09 Rate</div>
<svg style="position:absolute;left:368.9px;top:610.1px" width="21" height="21" viewBox="0 0 21 21"><path d="M10.5 0.5L20.5 10.5L10.5 20.5L0.5 10.5Z" fill="#ff0000"/></svg>
<div style="position:absolute;left:95.65px;top:615.17px;white-space:nowrap;font-family:'Liberation Serif', serif;font-weight:normal;font-size:12.2px;line-height:12.2px;color:#505050;transform:scaleX(1.1066);transform-origin:0 0;">100</div>
<div style="position:absolute;left:102.40px;top:636.62px;white-space:nowrap;font-family:'Liberation Serif', serif;font-weight:normal;font-size:12.2px;line-height:12.2px;color:#505050;transform:scaleX(1.1066);transform-origin:0 0;">75</div>
<div style="position:absolute;left:102.40px;top:657.71px;white-space:nowrap;font-family:'Liberation Serif', serif;font-weight:normal;font-size:12.2px;line-height:12.2px;color:#505050;transform:scaleX(1.1066);transform-origin:0 0;">50</div>
<div style="position:absolute;left:102.40px;top:679.51px;white-space:nowrap;font-family:'Liberation Serif', serif;font-weight:normal;font-size:12.2px;line-height:12.2px;color:#505050;transform:scaleX(1.1066);transform-origin:0 0;">25</div>
<div style="position:absolute;left:109.15px;top:700.89px;white-space:nowrap;font-family:'Liberation Serif', serif;font-weight:normal;font-size:12.2px;line-height:12.2px;color:#505050;transform:scaleX(1.1066);transform-origin:0 0;">0</div>
<div style="position:absolute;left:116.05px;top:711.13px;white-space:nowrap;font-family:'Liberation Serif', serif;font-weight:normal;font-size:12.2px;line-height:12.2px;color:#505050;transform:scaleX(1.1066);transform-origin:0 0;">0</div>
<div style="position:absolute;left:153.53px;top:711.13px;white-space:nowrap;font-family:'Liberation Serif', serif;font-weight:normal;font-size:12.2px;line-height:12.2px;color:#505050;transform:scaleX(1.1066);transform-origin:0 0;">20</div>
<div style="position:absolute;left:194.03px;top:711.13px;white-space:nowrap;font-family:'Liberation Serif', serif;font-weight:normal;font-size:12.2px;line-height:12.2px;color:#505050;transform:scaleX(1.1066);transform-origin:0 0;">40</div>
<div style="position:absolute;left:234.81px;top:711.13px;white-space:nowrap;font-family:'Liberation Serif', serif;font-weight:normal;font-size:12.2px;line-height:12.2px;color:#505050;transform:scaleX(1.1066);transform-origin:0 0;">60</div>
<div style="position:absolute;left:275.59px;top:711.13px;white-space:nowrap;font-family:'Liberation Serif', serif;font-weight:normal;font-size:12.2px;line-height:12.2px;color:#505050;transform:scaleX(1.1066);transform-origin:0 0;">80</div>
<div style="position:absolute;left:313.00px;top:711.13px;white-space:nowrap;font-family:'Liberation Serif', serif;font-weight:normal;font-size:12.2px;line-height:12.2px;color:#505050;transform:scaleX(1.1066);transform-origin:0 0;">100</div>
<div style="position:absolute;left:354.48px;top:711.13px;white-space:nowrap;font-family:'Liberation Serif', serif;font-weight:normal;font-size:12.2px;line-height:12.2px;color:#505050;transform:scaleX(1.1066);transform-origin:0 0;">120</div>
<svg style="position:absolute;left:591px;top:616px" width="270" height="94" viewBox="0 0 1920 668.44" preserveAspectRatio="none"><defs><clipPath id="cp10"><rect x="27" y="37" width="1873" height="620"/></clipPath></defs><line x1="322" y1="30" x2="322" y2="645" stroke="#eaeaea" stroke-width="1" vector-effect="non-scaling-stroke"/><line x1="610" y1="30" x2="610" y2="645" stroke="#eaeaea" stroke-width="1" vector-effect="non-scaling-stroke"/><line x1="900" y1="30" x2="900" y2="645" stroke="#eaeaea" stroke-width="1" vector-effect="non-scaling-stroke"/><line x1="1190" y1="30" x2="1190" y2="645" stroke="#eaeaea" stroke-width="1" vector-effect="non-scaling-stroke"/><line x1="1480" y1="30" x2="1480" y2="645" stroke="#eaeaea" stroke-width="1" vector-effect="non-scaling-stroke"/><line x1="1775" y1="30" x2="1775" y2="645" stroke="#eaeaea" stroke-width="1" vector-effect="non-scaling-stroke"/><line x1="27" y1="188" x2="1900" y2="188" stroke="#eaeaea" stroke-width="1" vector-effect="non-scaling-stroke"/><line x1="27" y1="338" x2="1900" y2="338" stroke="#eaeaea" stroke-width="1" vector-effect="non-scaling-stroke"/><line x1="27" y1="493" x2="1900" y2="493" stroke="#eaeaea" stroke-width="1" vector-effect="non-scaling-stroke"/><rect x="27" y="30" width="1873" height="615" fill="none" stroke="#7f7f7f" stroke-width="1.7" vector-effect="non-scaling-stroke"/><polyline points="30,645 45,645 45,-200 280,-200 280,645 508,645 508,-200 740,-200 740,645 970,645 970,-200 1205,-200 1205,645 1435,645 1435,-200 1518,-200 1518,645 1528,645 1528,-200 1535,-200 1535,645 1540,645 1540,-200 1622,-200 1622,645 1630,645 1630,-200 1634,-200 1634,645 1640,645 1640,-200 1665,-200 1665,645 1885,645" fill="none" stroke="#5252ff" stroke-width="1.0" vector-effect="non-scaling-stroke" clip-path="url(#cp10)"/></svg>
<div style="position:absolute;left:766.5px;top:626.5px;width:87px;height:16px;background:rgba(255,255,255,0.12)"></div>
<div style="position:absolute;left:768.2px;top:628.2px;width:14.5px;height:11.5px;box-sizing:border-box;border:1px solid #c8c8c8;background:#fff"></div>
<div style="position:absolute;left:770.2px;top:630.2px;width:10.5px;height:7.5px;background:#0000ff"></div>
<div style="position:absolute;left:786.30px;top:628.69px;white-space:nowrap;font-family:'Liberation Serif', serif;font-weight:normal;font-size:11px;line-height:11px;color:#8c8c8c;transform:scaleX(1.2484);transform-origin:0 0;">aida10 Rate</div>
<svg style="position:absolute;left:844.9px;top:610.1px" width="21" height="21" viewBox="0 0 21 21"><path d="M10.5 0.5L20.5 10.5L10.5 20.5L0.5 10.5Z" fill="#ff0000"/></svg>
<div style="position:absolute;left:571.65px;top:615.17px;white-space:nowrap;font-family:'Liberation Serif', serif;font-weight:normal;font-size:12.2px;line-height:12.2px;color:#505050;transform:scaleX(1.1066);transform-origin:0 0;">100</div>
<div style="position:absolute;left:578.40px;top:636.62px;white-space:nowrap;font-family:'Liberation Serif', serif;font-weight:normal;font-size:12.2px;line-height:12.2px;color:#505050;transform:scaleX(1.1066);transform-origin:0 0;">75</div>
<div style="position:absolute;left:578.40px;top:657.71px;white-space:nowrap;font-family:'Liberation Serif', serif;font-weight:normal;font-size:12.2px;line-height:12.2px;color:#505050;transform:scaleX(1.1066);transform-origin:0 0;">50</div>
<div style="position:absolute;left:578.40px;top:679.51px;white-space:nowrap;font-family:'Liberation Serif', serif;font-weight:normal;font-size:12.2px;line-height:12.2px;color:#505050;transform:scaleX(1.1066);transform-origin:0 0;">25</div>
<div style="position:absolute;left:585.15px;top:700.89px;white-space:nowrap;font-family:'Liberation Serif', serif;font-weight:normal;font-size:12.2px;line-height:12.2px;color:#505050;transform:scaleX(1.1066);transform-origin:0 0;">0</div>
<div style="position:absolute;left:592.05px;top:711.13px;white-space:nowrap;font-family:'Liberation Serif', serif;font-weight:normal;font-size:12.2px;line-height:12.2px;color:#505050;transform:scaleX(1.1066);transform-origin:0 0;">0</div>
<div style="position:absolute;left:629.53px;top:711.13px;white-space:nowrap;font-family:'Liberation Serif', serif;font-weight:normal;font-size:12.2px;line-height:12.2px;color:#505050;transform:scaleX(1.1066);transform-origin:0 0;">20</div>
<div style="position:absolute;left:670.03px;top:711.13px;white-space:nowrap;font-family:'Liberation Serif', serif;font-weight:normal;font-size:12.2px;line-height:12.2px;color:#505050;transform:scaleX(1.1066);transform-origin:0 0;">40</div>
<div style="position:absolute;left:710.81px;top:711.13px;white-space:nowrap;font-family:'Liberation Serif', serif;font-weight:normal;font-size:12.2px;line-height:12.2px;color:#505050;transform:scaleX(1.1066);transform-origin:0 0;">60</div>
<div style="position:absolute;left:751.59px;top:711.13px;white-space:nowrap;font-family:'Liberation Serif', serif;font-weight:normal;font-size:12.2px;line-height:12.2px;color:#505050;transform:scaleX(1.1066);transform-origin:0 0;">80</div>
<div style="position:absolute;left:789.00px;top:711.13px;white-space:nowrap;font-family:'Liberation Serif', serif;font-weight:normal;font-size:12.2px;line-height:12.2px;color:#505050;transform:scaleX(1.1066);transform-origin:0 0;">100</div>
<div style="position:absolute;left:830.48px;top:711.13px;white-space:nowrap;font-family:'Liberation Serif', serif;font-weight:normal;font-size:12.2px;line-height:12.2px;color:#505050;transform:scaleX(1.1066);transform-origin:0 0;">120</div>
<svg style="position:absolute;left:1067px;top:616px" width="270" height="94" viewBox="0 0 1920 668.44" preserveAspectRatio="none"><defs><clipPath id="cp11"><rect x="27" y="37" width="1873" height="620"/></clipPath></defs><line x1="322" y1="30" x2="322" y2="645" stroke="#eaeaea" stroke-width="1" vector-effect="non-scaling-stroke"/><line x1="610" y1="30" x2="610" y2="645" stroke="#eaeaea" stroke-width="1" vector-effect="non-scaling-stroke"/><line x1="900" y1="30" x2="900" y2="645" stroke="#eaeaea" stroke-width="1" vector-effect="non-scaling-stroke"/><line x1="1190" y1="30" x2="1190" y2="645" stroke="#eaeaea" stroke-width="1" vector-effect="non-scaling-stroke"/><line x1="1480" y1="30" x2="1480" y2="645" stroke="#eaeaea" stroke-width="1" vector-effect="non-scaling-stroke"/><line x1="1775" y1="30" x2="1775" y2="645" stroke="#eaeaea" stroke-width="1" vector-effect="non-scaling-stroke"/><line x1="27" y1="188" x2="1900" y2="188" stroke="#eaeaea" stroke-width="1" vector-effect="non-scaling-stroke"/><line x1="27" y1="338" x2="1900" y2="338" stroke="#eaeaea" stroke-width="1" vector-effect="non-scaling-stroke"/><line x1="27" y1="493" x2="1900" y2="493" stroke="#eaeaea" stroke-width="1" vector-effect="non-scaling-stroke"/><rect x="27" y="30" width="1873" height="615" fill="none" stroke="#7f7f7f" stroke-width="1.7" vector-effect="non-scaling-stroke"/><polyline points="30,645 45,645 45,-200 105,-200 105,88 120,88 120,278 135,278 135,130 150,130 150,270 165,270 165,278 280,278 280,645 508,645 508,150 522,150 522,278 540,278 540,260 555,260 555,278 740,278 740,645 970,645 970,260 985,260 985,185 1000,185 1000,138 1015,138 1015,278 1030,278 1030,222 1045,222 1045,278 1205,278 1205,645 1435,645 1435,-200 1450,-200 1450,278 1490,278 1490,130 1508,130 1508,278 1665,278 1665,645 1885,645" fill="none" stroke="#5252ff" stroke-width="1.0" vector-effect="non-scaling-stroke" clip-path="url(#cp11)"/></svg>
<div style="position:absolute;left:1242.5px;top:626.5px;width:87px;height:16px;background:rgba(255,255,255,0.12)"></div>
<div style="position:absolute;left:1244.2px;top:628.2px;width:14.5px;height:11.5px;box-sizing:border-box;border:1px solid #c8c8c8;background:#fff"></div>
<div style="position:absolute;left:1246.2px;top:630.2px;width:10.5px;height:7.5px;background:#0000ff"></div>
<div style="position:absolute;left:1262.30px;top:628.69px;white-space:nowrap;font-family:'Liberation Serif', serif;font-weight:normal;font-size:11px;line-height:11px;color:#8c8c8c;transform:scaleX(1.2582);transform-origin:0 0;">aida11 Rate</div>
<svg style="position:absolute;left:1320.9px;top:610.1px" width="21" height="21" viewBox="0 0 21 21"><path d="M10.5 0.5L20.5 10.5L10.5 20.5L0.5 10.5Z" fill="#ff0000"/></svg>
<div style="position:absolute;left:1047.65px;top:615.17px;white-space:nowrap;font-family:'Liberation Serif', serif;font-weight:normal;font-size:12.2px;line-height:12.2px;color:#505050;transform:scaleX(1.1066);transform-origin:0 0;">100</div>
<div style="position:absolute;left:1054.40px;top:636.62px;white-space:nowrap;font-family:'Liberation Serif', serif;font-weight:normal;font-size:12.2px;line-height:12.2px;color:#505050;transform:scaleX(1.1066);transform-origin:0 0;">75</div>
<div style="position:absolute;left:1054.40px;top:657.71px;white-space:nowrap;font-family:'Liberation Serif', serif;font-weight:normal;font-size:12.2px;line-height:12.2px;color:#505050;transform:scaleX(1.1066);transform-origin:0 0;">50</div>
<div style="position:absolute;left:1054.40px;top:679.51px;white-space:nowrap;font-family:'Liberation Serif', serif;font-weight:normal;font-size:12.2px;line-height:12.2px;color:#505050;transform:scaleX(1.1066);transform-origin:0 0;">25</div>
<div style="position:absolute;left:1061.15px;top:700.89px;white-space:nowrap;font-family:'Liberation Serif', serif;font-weight:normal;font-size:12.2px;line-height:12.2px;color:#505050;transform:scaleX(1.1066);transform-origin:0 0;">0</div>
<div style="position:absolute;left:1068.05px;top:711.13px;white-space:nowrap;font-family:'Liberation Serif', serif;font-weight:normal;font-size:12.2px;line-height:12.2px;color:#505050;transform:scaleX(1.1066);transform-origin:0 0;">0</div>
<div style="position:absolute;left:1105.53px;top:711.13px;white-space:nowrap;font-family:'Liberation Serif', serif;font-weight:normal;font-size:12.2px;line-height:12.2px;color:#505050;transform:scaleX(1.1066);transform-origin:0 0;">20</div>
<div style="position:absolute;left:1146.03px;top:711.13px;white-space:nowrap;font-family:'Liberation Serif', serif;font-weight:normal;font-size:12.2px;line-height:12.2px;color:#505050;transform:scaleX(1.1066);transform-origin:0 0;">40</div>
<div style="position:absolute;left:1186.81px;top:711.13px;white-space:nowrap;font-family:'Liberation Serif', serif;font-weight:normal;font-size:12.2px;line-height:12.2px;color:#505050;transform:scaleX(1.1066);transform-origin:0 0;">60</div>
<div style="position:absolute;left:1227.59px;top:711.13px;white-space:nowrap;font-family:'Liberation Serif', serif;font-weight:normal;font-size:12.2px;line-height:12.2px;color:#505050;transform:scaleX(1.1066);transform-origin:0 0;">80</div>
<div style="position:absolute;left:1265.00px;top:711.13px;white-space:nowrap;font-family:'Liberation Serif', serif;font-weight:normal;font-size:12.2px;line-height:12.2px;color:#505050;transform:scaleX(1.1066);transform-origin:0 0;">100</div>
<div style="position:absolute;left:1306.48px;top:711.13px;white-space:nowrap;font-family:'Liberation Serif', serif;font-weight:normal;font-size:12.2px;line-height:12.2px;color:#505050;transform:scaleX(1.1066);transform-origin:0 0;">120</div>
<svg style="position:absolute;left:1543px;top:616px" width="270" height="94" viewBox="0 0 1920 668.44" preserveAspectRatio="none"><defs><clipPath id="cp12"><rect x="27" y="37" width="1873" height="620"/></clipPath></defs><line x1="322" y1="30" x2="322" y2="645" stroke="#eaeaea" stroke-width="1" vector-effect="non-scaling-stroke"/><line x1="610" y1="30" x2="610" y2="645" stroke="#eaeaea" stroke-width="1" vector-effect="non-scaling-stroke"/><line x1="900" y1="30" x2="900" y2="645" stroke="#eaeaea" stroke-width="1" vector-effect="non-scaling-stroke"/><line x1="1190" y1="30" x2="1190" y2="645" stroke="#eaeaea" stroke-width="1" vector-effect="non-scaling-stroke"/><line x1="1480" y1="30" x2="1480" y2="645" stroke="#eaeaea" stroke-width="1" vector-effect="non-scaling-stroke"/><line x1="1775" y1="30" x2="1775" y2="645" stroke="#eaeaea" stroke-width="1" vector-effect="non-scaling-stroke"/><line x1="27" y1="188" x2="1900" y2="188" stroke="#eaeaea" stroke-width="1" vector-effect="non-scaling-stroke"/><line x1="27" y1="338" x2="1900" y2="338" stroke="#eaeaea" stroke-width="1" vector-effect="non-scaling-stroke"/><line x1="27" y1="493" x2="1900" y2="493" stroke="#eaeaea" stroke-width="1" vector-effect="non-scaling-stroke"/><rect x="27" y="30" width="1873" height="615" fill="none" stroke="#7f7f7f" stroke-width="1.7" vector-effect="non-scaling-stroke"/><polyline points="30,645 45,645 45,-200 60,-200 60,278 280,278 280,645 508,645 508,-200 565,-200 565,45 568,45 568,265 585,265 585,278 740,278 740,645 970,645 970,-200 985,-200 985,80 1000,80 1000,-200 1015,-200 1015,255 1040,255 1040,278 1205,278 1205,645 1435,645 1435,-200 1478,-200 1478,180 1492,180 1492,-200 1508,-200 1508,278 1665,278 1665,645 1885,645" fill="none" stroke="#5252ff" stroke-width="1.0" vector-effect="non-scaling-stroke" clip-path="url(#cp12)"/></svg>
<div style="position:absolute;left:1718.5px;top:626.5px;width:87px;height:16px;background:rgba(255,255,255,0.12)"></div>
<div style="position:absolute;left:1720.2px;top:628.2px;width:14.5px;height:11.5px;box-sizing:border-box;border:1px solid #c8c8c8;background:#fff"></div>
<div style="position:absolute;left:1722.2px;top:630.2px;width:10.5px;height:7.5px;background:#0000ff"></div>
<div style="position:absolute;left:1738.30px;top:628.69px;white-space:nowrap;font-family:'Liberation Serif', serif;font-weight:normal;font-size:11px;line-height:11px;color:#8c8c8c;transform:scaleX(1.2484);transform-origin:0 0;">aida12 Rate</div>
<svg style="position:absolute;left:1796.9px;top:610.1px" width="21" height="21" viewBox="0 0 21 21"><path d="M10.5 0.5L20.5 10.5L10.5 20.5L0.5 10.5Z" fill="#ff0000"/></svg>
<div style="position:absolute;left:1523.65px;top:615.17px;white-space:nowrap;font-family:'Liberation Serif', serif;font-weight:normal;font-size:12.2px;line-height:12.2px;color:#505050;transform:scaleX(1.1066);transform-origin:0 0;">100</div>
<div style="position:absolute;left:1530.40px;top:636.62px;white-space:nowrap;font-family:'Liberation Serif', serif;font-weight:normal;font-size:12.2px;line-height:12.2px;color:#505050;transform:scaleX(1.1066);transform-origin:0 0;">75</div>
<div style="position:absolute;left:1530.40px;top:657.71px;white-space:nowrap;font-family:'Liberation Serif', serif;font-weight:normal;font-size:12.2px;line-height:12.2px;color:#505050;transform:scaleX(1.1066);transform-origin:0 0;">50</div>
<div style="position:absolute;left:1530.40px;top:679.51px;white-space:nowrap;font-family:'Liberation Serif', serif;font-weight:normal;font-size:12.2px;line-height:12.2px;color:#505050;transform:scaleX(1.1066);transform-origin:0 0;">25</div>
<div style="position:absolute;left:1537.15px;top:700.89px;white-space:nowrap;font-family:'Liberation Serif', serif;font-weight:normal;font-size:12.2px;line-height:12.2px;color:#505050;transform:scaleX(1.1066);transform-origin:0 0;">0</div>
<div style="position:absolute;left:1544.05px;top:711.13px;white-space:nowrap;font-family:'Liberation Serif', serif;font-weight:normal;font-size:12.2px;line-height:12.2px;color:#505050;transform:scaleX(1.1066);transform-origin:0 0;">0</div>
<div style="position:absolute;left:1581.53px;top:711.13px;white-space:nowrap;font-family:'Liberation Serif', serif;font-weight:normal;font-size:12.2px;line-height:12.2px;color:#505050;transform:scaleX(1.1066);transform-origin:0 0;">20</div>
<div style="position:absolute;left:1622.03px;top:711.13px;white-space:nowrap;font-family:'Liberation Serif', serif;font-weight:normal;font-size:12.2px;line-height:12.2px;color:#505050;transform:scaleX(1.1066);transform-origin:0 0;">40</div>
<div style="position:absolute;left:1662.81px;top:711.13px;white-space:nowrap;font-family:'Liberation Serif', serif;font-weight:normal;font-size:12.2px;line-height:12.2px;color:#505050;transform:scaleX(1.1066);transform-origin:0 0;">60</div>
<div style="position:absolute;left:1703.59px;top:711.13px;white-space:nowrap;font-family:'Liberation Serif', serif;font-weight:normal;font-size:12.2px;line-height:12.2px;color:#505050;transform:scaleX(1.1066);transform-origin:0 0;">80</div>
<div style="position:absolute;left:1741.00px;top:711.13px;white-space:nowrap;font-family:'Liberation Serif', serif;font-weight:normal;font-size:12.2px;line-height:12.2px;color:#505050;transform:scaleX(1.1066);transform-origin:0 0;">100</div>
<div style="position:absolute;left:1782.48px;top:711.13px;white-space:nowrap;font-family:'Liberation Serif', serif;font-weight:normal;font-size:12.2px;line-height:12.2px;color:#505050;transform:scaleX(1.1066);transform-origin:0 0;">120</div>
<svg style="position:absolute;left:115px;top:738px" width="270" height="94" viewBox="0 0 1920 668.44" preserveAspectRatio="none"><defs><clipPath id="cp13"><rect x="27" y="37" width="1873" height="620"/></clipPath></defs><line x1="322" y1="30" x2="322" y2="645" stroke="#eaeaea" stroke-width="1" vector-effect="non-scaling-stroke"/><line x1="610" y1="30" x2="610" y2="645" stroke="#eaeaea" stroke-width="1" vector-effect="non-scaling-stroke"/><line x1="900" y1="30" x2="900" y2="645" stroke="#eaeaea" stroke-width="1" vector-effect="non-scaling-stroke"/><line x1="1190" y1="30" x2="1190" y2="645" stroke="#eaeaea" stroke-width="1" vector-effect="non-scaling-stroke"/><line x1="1480" y1="30" x2="1480" y2="645" stroke="#eaeaea" stroke-width="1" vector-effect="non-scaling-stroke"/><line x1="1775" y1="30" x2="1775" y2="645" stroke="#eaeaea" stroke-width="1" vector-effect="non-scaling-stroke"/><line x1="27" y1="188" x2="1900" y2="188" stroke="#eaeaea" stroke-width="1" vector-effect="non-scaling-stroke"/><line x1="27" y1="338" x2="1900" y2="338" stroke="#eaeaea" stroke-width="1" vector-effect="non-scaling-stroke"/><line x1="27" y1="493" x2="1900" y2="493" stroke="#eaeaea" stroke-width="1" vector-effect="non-scaling-stroke"/><rect x="27" y="30" width="1873" height="615" fill="none" stroke="#7f7f7f" stroke-width="1.7" vector-effect="non-scaling-stroke"/><polyline points="30,645 45,645 45,-200 132,-200 132,165 148,165 148,120 162,120 162,150 175,150 175,185 190,185 190,205 210,205 210,228 225,228 225,212 240,212 240,230 280,230 280,645 508,645 508,-200 568,-200 568,225 590,225 590,240 600,240 600,225 615,225 615,262 635,262 635,278 685,278 685,205 700,205 700,275 720,275 720,270 740,270 740,645 970,645 970,-200 1075,-200 1075,155 1090,155 1090,-200 1105,-200 1105,200 1125,200 1125,195 1140,195 1140,200 1190,200 1190,205 1205,205 1205,645 1435,645 1435,-200 1450,-200 1450,70 1465,70 1465,-200 1480,-200 1480,100 1495,100 1495,-200 1508,-200 1508,210 1535,210 1535,220 1552,220 1552,278 1665,278 1665,645 1885,645" fill="none" stroke="#5252ff" stroke-width="1.0" vector-effect="non-scaling-stroke" clip-path="url(#cp13)"/></svg>
<div style="position:absolute;left:290.5px;top:748.5px;width:87px;height:16px;background:rgba(255,255,255,0.12)"></div>
<div style="position:absolute;left:292.2px;top:750.2px;width:14.5px;height:11.5px;box-sizing:border-box;border:1px solid #c8c8c8;background:#fff"></div>
<div style="position:absolute;left:294.2px;top:752.2px;width:10.5px;height:7.5px;background:#0000ff"></div>
<div style="position:absolute;left:310.30px;top:750.69px;white-space:nowrap;font-family:'Liberation Serif', serif;font-weight:normal;font-size:11px;line-height:11px;color:#8c8c8c;transform:scaleX(1.2484);transform-origin:0 0;">aida13 Rate</div>
<svg style="position:absolute;left:368.9px;top:732.1px" width="21" height="21" viewBox="0 0 21 21"><path d="M10.5 0.5L20.5 10.5L10.5 20.5L0.5 10.5Z" fill="#ff0000"/></svg>
<div style="position:absolute;left:95.65px;top:737.17px;white-space:nowrap;font-family:'Liberation Serif', serif;font-weight:normal;font-size:12.2px;line-height:12.2px;color:#505050;transform:scaleX(1.1066);transform-origin:0 0;">100</div>
<div style="position:absolute;left:102.40px;top:758.62px;white-space:nowrap;font-family:'Liberation Serif', serif;font-weight:normal;font-size:12.2px;line-height:12.2px;color:#505050;transform:scaleX(1.1066);transform-origin:0 0;">75</div>
<div style="position:absolute;left:102.40px;top:779.71px;white-space:nowrap;font-family:'Liberation Serif', serif;font-weight:normal;font-size:12.2px;line-height:12.2px;color:#505050;transform:scaleX(1.1066);transform-origin:0 0;">50</div>
<div style="position:absolute;left:102.40px;top:801.51px;white-space:nowrap;font-family:'Liberation Serif', serif;font-weight:normal;font-size:12.2px;line-height:12.2px;color:#505050;transform:scaleX(1.1066);transform-origin:0 0;">25</div>
<div style="position:absolute;left:109.15px;top:822.89px;white-space:nowrap;font-family:'Liberation Serif', serif;font-weight:normal;font-size:12.2px;line-height:12.2px;color:#505050;transform:scaleX(1.1066);transform-origin:0 0;">0</div>
<div style="position:absolute;left:116.05px;top:833.13px;white-space:nowrap;font-family:'Liberation Serif', serif;font-weight:normal;font-size:12.2px;line-height:12.2px;color:#505050;transform:scaleX(1.1066);transform-origin:0 0;">0</div>
<div style="position:absolute;left:153.53px;top:833.13px;white-space:nowrap;font-family:'Liberation Serif', serif;font-weight:normal;font-size:12.2px;line-height:12.2px;color:#505050;transform:scaleX(1.1066);transform-origin:0 0;">20</div>
<div style="position:absolute;left:194.03px;top:833.13px;white-space:nowrap;font-family:'Liberation Serif', serif;font-weight:normal;font-size:12.2px;line-height:12.2px;color:#505050;transform:scaleX(1.1066);transform-origin:0 0;">40</div>
<div style="position:absolute;left:234.81px;top:833.13px;white-space:nowrap;font-family:'Liberation Serif', serif;font-weight:normal;font-size:12.2px;line-height:12.2px;color:#505050;transform:scaleX(1.1066);transform-origin:0 0;">60</div>
<div style="position:absolute;left:275.59px;top:833.13px;white-space:nowrap;font-family:'Liberation Serif', serif;font-weight:normal;font-size:12.2px;line-height:12.2px;color:#505050;transform:scaleX(1.1066);transform-origin:0 0;">80</div>
<div style="position:absolute;left:313.00px;top:833.13px;white-space:nowrap;font-family:'Liberation Serif', serif;font-weight:normal;font-size:12.2px;line-height:12.2px;color:#505050;transform:scaleX(1.1066);transform-origin:0 0;">100</div>
<div style="position:absolute;left:354.48px;top:833.13px;white-space:nowrap;font-family:'Liberation Serif', serif;font-weight:normal;font-size:12.2px;line-height:12.2px;color:#505050;transform:scaleX(1.1066);transform-origin:0 0;">120</div>
<svg style="position:absolute;left:591px;top:738px" width="270" height="94" viewBox="0 0 1920 668.44" preserveAspectRatio="none"><defs><clipPath id="cp14"><rect x="27" y="37" width="1873" height="620"/></clipPath></defs><line x1="322" y1="30" x2="322" y2="645" stroke="#eaeaea" stroke-width="1" vector-effect="non-scaling-stroke"/><line x1="610" y1="30" x2="610" y2="645" stroke="#eaeaea" stroke-width="1" vector-effect="non-scaling-stroke"/><line x1="900" y1="30" x2="900" y2="645" stroke="#eaeaea" stroke-width="1" vector-effect="non-scaling-stroke"/><line x1="1190" y1="30" x2="1190" y2="645" stroke="#eaeaea" stroke-width="1" vector-effect="non-scaling-stroke"/><line x1="1480" y1="30" x2="1480" y2="645" stroke="#eaeaea" stroke-width="1" vector-effect="non-scaling-stroke"/><line x1="1775" y1="30" x2="1775" y2="645" stroke="#eaeaea" stroke-width="1" vector-effect="non-scaling-stroke"/><line x1="27" y1="188" x2="1900" y2="188" stroke="#eaeaea" stroke-width="1" vector-effect="non-scaling-stroke"/><line x1="27" y1="338" x2="1900" y2="338" stroke="#eaeaea" stroke-width="1" vector-effect="non-scaling-stroke"/><line x1="27" y1="493" x2="1900" y2="493" stroke="#eaeaea" stroke-width="1" vector-effect="non-scaling-stroke"/><rect x="27" y="30" width="1873" height="615" fill="none" stroke="#7f7f7f" stroke-width="1.7" vector-effect="non-scaling-stroke"/><polyline points="30,645 45,645 45,155 90,155 90,160 118,160 118,195 132,195 132,375 150,375 150,400 162,400 162,290 178,290 178,400 280,400 280,645 508,645 508,155 555,155 555,160 580,160 580,235 598,235 598,218 610,218 610,355 625,355 625,400 740,400 740,645 970,645 970,160 1000,160 1000,175 1030,175 1030,238 1045,238 1045,400 1205,400 1205,645 1435,645 1435,165 1480,165 1480,175 1495,175 1495,160 1510,160 1510,175 1535,175 1535,400 1552,400 1552,320 1568,320 1568,400 1612,400 1612,370 1625,370 1625,400 1640,400 1640,225 1655,225 1655,400 1665,400 1665,645 1885,645" fill="none" stroke="#5252ff" stroke-width="1.0" vector-effect="non-scaling-stroke" clip-path="url(#cp14)"/></svg>
<div style="position:absolute;left:766.5px;top:748.5px;width:87px;height:16px;background:rgba(255,255,255,0.12)"></div>
<div style="position:absolute;left:768.2px;top:750.2px;width:14.5px;height:11.5px;box-sizing:border-box;border:1px solid #c8c8c8;background:#fff"></div>
<div style="position:absolute;left:770.2px;top:752.2px;width:10.5px;height:7.5px;background:#0000ff"></div>
<div style="position:absolute;left:786.30px;top:750.69px;white-space:nowrap;font-family:'Liberation Serif', serif;font-weight:normal;font-size:11px;line-height:11px;color:#8c8c8c;transform:scaleX(1.2484);transform-origin:0 0;">aida14 Rate</div>
<svg style="position:absolute;left:844.9px;top:732.1px" width="21" height="21" viewBox="0 0 21 21"><path d="M10.5 0.5L20.5 10.5L10.5 20.5L0.5 10.5Z" fill="#ff0000"/></svg>
<div style="position:absolute;left:571.65px;top:737.17px;white-space:nowrap;font-family:'Liberation Serif', serif;font-weight:normal;font-size:12.2px;line-height:12.2px;color:#505050;transform:scaleX(1.1066);transform-origin:0 0;">100</div>
<div style="position:absolute;left:578.40px;top:758.62px;white-space:nowrap;font-family:'Liberation Serif', serif;font-weight:normal;font-size:12.2px;line-height:12.2px;color:#505050;transform:scaleX(1.1066);transform-origin:0 0;">75</div>
<div style="position:absolute;left:578.40px;top:779.71px;white-space:nowrap;font-family:'Liberation Serif', serif;font-weight:normal;font-size:12.2px;line-height:12.2px;color:#505050;transform:scaleX(1.1066);transform-origin:0 0;">50</div>
<div style="position:absolute;left:578.40px;top:801.51px;white-space:nowrap;font-family:'Liberation Serif', serif;font-weight:normal;font-size:12.2px;line-height:12.2px;color:#505050;transform:scaleX(1.1066);transform-origin:0 0;">25</div>
<div style="position:absolute;left:585.15px;top:822.89px;white-space:nowrap;font-family:'Liberation Serif', serif;font-weight:normal;font-size:12.2px;line-height:12.2px;color:#505050;transform:scaleX(1.1066);transform-origin:0 0;">0</div>
<div style="position:absolute;left:592.05px;top:833.13px;white-space:nowrap;font-family:'Liberation Serif', serif;font-weight:normal;font-size:12.2px;line-height:12.2px;color:#505050;transform:scaleX(1.1066);transform-origin:0 0;">0</div>
<div style="position:absolute;left:629.53px;top:833.13px;white-space:nowrap;font-family:'Liberation Serif', serif;font-weight:normal;font-size:12.2px;line-height:12.2px;color:#505050;transform:scaleX(1.1066);transform-origin:0 0;">20</div>
<div style="position:absolute;left:670.03px;top:833.13px;white-space:nowrap;font-family:'Liberation Serif', serif;font-weight:normal;font-size:12.2px;line-height:12.2px;color:#505050;transform:scaleX(1.1066);transform-origin:0 0;">40</div>
<div style="position:absolute;left:710.81px;top:833.13px;white-space:nowrap;font-family:'Liberation Serif', serif;font-weight:normal;font-size:12.2px;line-height:12.2px;color:#505050;transform:scaleX(1.1066);transform-origin:0 0;">60</div>
<div style="position:absolute;left:751.59px;top:833.13px;white-space:nowrap;font-family:'Liberation Serif', serif;font-weight:normal;font-size:12.2px;line-height:12.2px;color:#505050;transform:scaleX(1.1066);transform-origin:0 0;">80</div>
<div style="position:absolute;left:789.00px;top:833.13px;white-space:nowrap;font-family:'Liberation Serif', serif;font-weight:normal;font-size:12.2px;line-height:12.2px;color:#505050;transform:scaleX(1.1066);transform-origin:0 0;">100</div>
<div style="position:absolute;left:830.48px;top:833.13px;white-space:nowrap;font-family:'Liberation Serif', serif;font-weight:normal;font-size:12.2px;line-height:12.2px;color:#505050;transform:scaleX(1.1066);transform-origin:0 0;">120</div>
<svg style="position:absolute;left:1067px;top:738px" width="270" height="94" viewBox="0 0 1920 668.44" preserveAspectRatio="none"><defs><clipPath id="cp15"><rect x="27" y="37" width="1873" height="620"/></clipPath></defs><line x1="322" y1="30" x2="322" y2="645" stroke="#eaeaea" stroke-width="1" vector-effect="non-scaling-stroke"/><line x1="610" y1="30" x2="610" y2="645" stroke="#eaeaea" stroke-width="1" vector-effect="non-scaling-stroke"/><line x1="900" y1="30" x2="900" y2="645" stroke="#eaeaea" stroke-width="1" vector-effect="non-scaling-stroke"/><line x1="1190" y1="30" x2="1190" y2="645" stroke="#eaeaea" stroke-width="1" vector-effect="non-scaling-stroke"/><line x1="1480" y1="30" x2="1480" y2="645" stroke="#eaeaea" stroke-width="1" vector-effect="non-scaling-stroke"/><line x1="1775" y1="30" x2="1775" y2="645" stroke="#eaeaea" stroke-width="1" vector-effect="non-scaling-stroke"/><line x1="27" y1="188" x2="1900" y2="188" stroke="#eaeaea" stroke-width="1" vector-effect="non-scaling-stroke"/><line x1="27" y1="338" x2="1900" y2="338" stroke="#eaeaea" stroke-width="1" vector-effect="non-scaling-stroke"/><line x1="27" y1="493" x2="1900" y2="493" stroke="#eaeaea" stroke-width="1" vector-effect="non-scaling-stroke"/><rect x="27" y="30" width="1873" height="615" fill="none" stroke="#7f7f7f" stroke-width="1.7" vector-effect="non-scaling-stroke"/><polyline points="30,645 45,645 45,155 60,155 60,400 75,400 75,395 90,395 90,400 280,400 280,645 508,645 508,358 522,358 522,400 668,400 668,645 685,645 685,400 740,400 740,645 970,645 970,340 985,340 985,290 1000,290 1000,400 1205,400 1205,645 1435,645 1435,160 1450,160 1450,325 1465,325 1465,195 1478,195 1478,385 1490,385 1490,-200 1498,-200 1498,385 1505,385 1505,-200 1512,-200 1512,380 1522,380 1522,290 1538,290 1538,645 1552,645 1552,385 1570,385 1570,400 1590,400 1590,390 1598,390 1598,-200 1608,-200 1608,400 1640,400 1640,395 1655,395 1655,400 1665,400 1665,645 1885,645" fill="none" stroke="#5252ff" stroke-width="1.0" vector-effect="non-scaling-stroke" clip-path="url(#cp15)"/></svg>
<div style="position:absolute;left:1242.5px;top:748.5px;width:87px;height:16px;background:rgba(255,255,255,0.12)"></div>
<div style="position:absolute;left:1244.2px;top:750.2px;width:14.5px;height:11.5px;box-sizing:border-box;border:1px solid #c8c8c8;background:#fff"></div>
<div style="position:absolute;left:1246.2px;top:752.2px;width:10.5px;height:7.5px;background:#0000ff"></div>
<div style="position:absolute;left:1262.30px;top:750.69px;white-space:nowrap;font-family:'Liberation Serif', serif;font-weight:normal;font-size:11px;line-height:11px;color:#8c8c8c;transform:scaleX(1.2484);transform-origin:0 0;">aida15 Rate</div>
<svg style="position:absolute;left:1320.9px;top:732.1px" width="21" height="21" viewBox="0 0 21 21"><path d="M10.5 0.5L20.5 10.5L10.5 20.5L0.5 10.5Z" fill="#ff0000"/></svg>
<div style="position:absolute;left:1047.65px;top:737.17px;white-space:nowrap;font-family:'Liberation Serif', serif;font-weight:normal;font-size:12.2px;line-height:12.2px;color:#505050;transform:scaleX(1.1066);transform-origin:0 0;">100</div>
<div style="position:absolute;left:1054.40px;top:758.62px;white-space:nowrap;font-family:'Liberation Serif', serif;font-weight:normal;font-size:12.2px;line-height:12.2px;color:#505050;transform:scaleX(1.1066);transform-origin:0 0;">75</div>
<div style="position:absolute;left:1054.40px;top:779.71px;white-space:nowrap;font-family:'Liberation Serif', serif;font-weight:normal;font-size:12.2px;line-height:12.2px;color:#505050;transform:scaleX(1.1066);transform-origin:0 0;">50</div>
<div style="position:absolute;left:1054.40px;top:801.51px;white-space:nowrap;font-family:'Liberation Serif', serif;font-weight:normal;font-size:12.2px;line-height:12.2px;color:#505050;transform:scaleX(1.1066);transform-origin:0 0;">25</div>
<div style="position:absolute;left:1061.15px;top:822.89px;white-space:nowrap;font-family:'Liberation Serif', serif;font-weight:normal;font-size:12.2px;line-height:12.2px;color:#505050;transform:scaleX(1.1066);transform-origin:0 0;">0</div>
<div style="position:absolute;left:1068.05px;top:833.13px;white-space:nowrap;font-family:'Liberation Serif', serif;font-weight:normal;font-size:12.2px;line-height:12.2px;color:#505050;transform:scaleX(1.1066);transform-origin:0 0;">0</div>
<div style="position:absolute;left:1105.53px;top:833.13px;white-space:nowrap;font-family:'Liberation Serif', serif;font-weight:normal;font-size:12.2px;line-height:12.2px;color:#505050;transform:scaleX(1.1066);transform-origin:0 0;">20</div>
<div style="position:absolute;left:1146.03px;top:833.13px;white-space:nowrap;font-family:'Liberation Serif', serif;font-weight:normal;font-size:12.2px;line-height:12.2px;color:#505050;transform:scaleX(1.1066);transform-origin:0 0;">40</div>
<div style="position:absolute;left:1186.81px;top:833.13px;white-space:nowrap;font-family:'Liberation Serif', serif;font-weight:normal;font-size:12.2px;line-height:12.2px;color:#505050;transform:scaleX(1.1066);transform-origin:0 0;">60</div>
<div style="position:absolute;left:1227.59px;top:833.13px;white-space:nowrap;font-family:'Liberation Serif', serif;font-weight:normal;font-size:12.2px;line-height:12.2px;color:#505050;transform:scaleX(1.1066);transform-origin:0 0;">80</div>
<div style="position:absolute;left:1265.00px;top:833.13px;white-space:nowrap;font-family:'Liberation Serif', serif;font-weight:normal;font-size:12.2px;line-height:12.2px;color:#505050;transform:scaleX(1.1066);transform-origin:0 0;">100</div>
<div style="position:absolute;left:1306.48px;top:833.13px;white-space:nowrap;font-family:'Liberation Serif', serif;font-weight:normal;font-size:12.2px;line-height:12.2px;color:#505050;transform:scaleX(1.1066);transform-origin:0 0;">120</div>
<svg style="position:absolute;left:1543px;top:738px" width="270" height="94" viewBox="0 0 1920 668.44" preserveAspectRatio="none"><defs><clipPath id="cp16"><rect x="27" y="37" width="1873" height="620"/></clipPath></defs><line x1="322" y1="30" x2="322" y2="645" stroke="#cdcdcd" stroke-width="1" vector-effect="non-scaling-stroke"/><line x1="610" y1="30" x2="610" y2="645" stroke="#cdcdcd" stroke-width="1" vector-effect="non-scaling-stroke"/><line x1="900" y1="30" x2="900" y2="645" stroke="#cdcdcd" stroke-width="1" vector-effect="non-scaling-stroke"/><line x1="1190" y1="30" x2="1190" y2="645" stroke="#cdcdcd" stroke-width="1" vector-effect="non-scaling-stroke"/><line x1="1480" y1="30" x2="1480" y2="645" stroke="#cdcdcd" stroke-width="1" vector-effect="non-scaling-stroke"/><line x1="1775" y1="30" x2="1775" y2="645" stroke="#cdcdcd" stroke-width="1" vector-effect="non-scaling-stroke"/><line x1="27" y1="188" x2="1900" y2="188" stroke="#cdcdcd" stroke-width="1" vector-effect="non-scaling-stroke"/><line x1="27" y1="338" x2="1900" y2="338" stroke="#cdcdcd" stroke-width="1" vector-effect="non-scaling-stroke"/><line x1="27" y1="493" x2="1900" y2="493" stroke="#cdcdcd" stroke-width="1" vector-effect="non-scaling-stroke"/><rect x="27" y="30" width="1873" height="615" fill="none" stroke="#000" stroke-width="2" vector-effect="non-scaling-stroke"/><polyline points="30,645 45,645 45,155 75,155 75,235 90,235 90,160 105,160 105,185 118,185 118,340 132,340 132,385 150,385 150,400 280,400 280,645 508,645 508,155 530,155 530,170 555,170 555,155 568,155 568,205 580,205 580,335 595,335 595,210 610,210 610,380 625,380 625,400 740,400 740,645 970,645 970,180 985,180 985,320 1000,320 1000,400 1020,400 1020,390 1030,390 1030,360 1045,360 1045,318 1060,318 1060,400 1205,400 1205,645 1435,645 1435,175 1450,175 1450,185 1465,185 1465,168 1480,168 1480,385 1495,385 1495,238 1508,238 1508,400 1552,400 1552,175 1568,175 1568,400 1665,400 1665,645 1885,645" fill="none" stroke="#5252ff" stroke-width="1.0" vector-effect="non-scaling-stroke" clip-path="url(#cp16)"/></svg>
<div style="position:absolute;left:1718.5px;top:748.5px;width:87px;height:16px;background:rgba(255,255,255,0.12)"></div>
<div style="position:absolute;left:1720.2px;top:750.2px;width:14.5px;height:11.5px;box-sizing:border-box;border:1px solid #c8c8c8;background:#fff"></div>
<div style="position:absolute;left:1722.2px;top:752.2px;width:10.5px;height:7.5px;background:#0000ff"></div>
<div style="position:absolute;left:1738.30px;top:750.69px;white-space:nowrap;font-family:'Liberation Serif', serif;font-weight:normal;font-size:11px;line-height:11px;color:#222;transform:scaleX(1.2484);transform-origin:0 0;">aida16 Rate</div>
<svg style="position:absolute;left:1796.9px;top:732.1px" width="21" height="21" viewBox="0 0 21 21"><path d="M10.5 0.5L20.5 10.5L10.5 20.5L0.5 10.5Z" fill="#00e600"/></svg>
<div style="position:absolute;left:1523.65px;top:737.17px;white-space:nowrap;font-family:'Liberation Serif', serif;font-weight:normal;font-size:12.2px;line-height:12.2px;color:#505050;transform:scaleX(1.1066);transform-origin:0 0;">100</div>
<div style="position:absolute;left:1530.40px;top:758.62px;white-space:nowrap;font-family:'Liberation Serif', serif;font-weight:normal;font-size:12.2px;line-height:12.2px;color:#505050;transform:scaleX(1.1066);transform-origin:0 0;">75</div>
<div style="position:absolute;left:1530.40px;top:779.71px;white-space:nowrap;font-family:'Liberation Serif', serif;font-weight:normal;font-size:12.2px;line-height:12.2px;color:#505050;transform:scaleX(1.1066);transform-origin:0 0;">50</div>
<div style="position:absolute;left:1530.40px;top:801.51px;white-space:nowrap;font-family:'Liberation Serif', serif;font-weight:normal;font-size:12.2px;line-height:12.2px;color:#505050;transform:scaleX(1.1066);transform-origin:0 0;">25</div>
<div style="position:absolute;left:1537.15px;top:822.89px;white-space:nowrap;font-family:'Liberation Serif', serif;font-weight:normal;font-size:12.2px;line-height:12.2px;color:#505050;transform:scaleX(1.1066);transform-origin:0 0;">0</div>
<div style="position:absolute;left:1544.05px;top:833.13px;white-space:nowrap;font-family:'Liberation Serif', serif;font-weight:normal;font-size:12.2px;line-height:12.2px;color:#505050;transform:scaleX(1.1066);transform-origin:0 0;">0</div>
<div style="position:absolute;left:1581.53px;top:833.13px;white-space:nowrap;font-family:'Liberation Serif', serif;font-weight:normal;font-size:12.2px;line-height:12.2px;color:#505050;transform:scaleX(1.1066);transform-origin:0 0;">20</div>
<div style="position:absolute;left:1622.03px;top:833.13px;white-space:nowrap;font-family:'Liberation Serif', serif;font-weight:normal;font-size:12.2px;line-height:12.2px;color:#505050;transform:scaleX(1.1066);transform-origin:0 0;">40</div>
<div style="position:absolute;left:1662.81px;top:833.13px;white-space:nowrap;font-family:'Liberation Serif', serif;font-weight:normal;font-size:12.2px;line-height:12.2px;color:#505050;transform:scaleX(1.1066);transform-origin:0 0;">60</div>
<div style="position:absolute;left:1703.59px;top:833.13px;white-space:nowrap;font-family:'Liberation Serif', serif;font-weight:normal;font-size:12.2px;line-height:12.2px;color:#505050;transform:scaleX(1.1066);transform-origin:0 0;">80</div>
<div style="position:absolute;left:1741.00px;top:833.13px;white-space:nowrap;font-family:'Liberation Serif', serif;font-weight:normal;font-size:12.2px;line-height:12.2px;color:#505050;transform:scaleX(1.1066);transform-origin:0 0;">100</div>
<div style="position:absolute;left:1782.48px;top:833.13px;white-space:nowrap;font-family:'Liberation Serif', serif;font-weight:normal;font-size:12.2px;line-height:12.2px;color:#505050;transform:scaleX(1.1066);transform-origin:0 0;">120</div>
<div style="position:absolute;left:6.30px;top:862.00px;width:99.40px;height:18.70px;box-sizing:border-box;background:#e9e9ed;border:1px solid #8f8f9d;border-radius:3.5px"></div>
<div style="position:absolute;left:11.34px;top:866.11px;white-space:nowrap;font-family:'Liberation Sans', sans-serif;font-weight:normal;font-size:10.8px;line-height:10.8px;color:#1b1b1b;transform:scaleX(0.9600);transform-origin:0 0;">Empty Log Window</div>
<div style="position:absolute;left:110.30px;top:862.00px;width:131.40px;height:18.70px;box-sizing:border-box;background:#e9e9ed;border:1px solid #8f8f9d;border-radius:3.5px"></div>
<div style="position:absolute;left:114.61px;top:866.11px;white-space:nowrap;font-family:'Liberation Sans', sans-serif;font-weight:normal;font-size:10.8px;line-height:10.8px;color:#1b1b1b;transform:scaleX(0.9600);transform-origin:0 0;">Send Log Window to ELog</div>
<div style="position:absolute;left:246.30px;top:862.00px;width:39.40px;height:18.70px;box-sizing:border-box;background:#e9e9ed;border:1px solid #8f8f9d;border-radius:3.5px"></div>
<div style="position:absolute;left:249.57px;top:866.11px;white-space:nowrap;font-family:'Liberation Sans', sans-serif;font-weight:normal;font-size:10.8px;line-height:10.8px;color:#1b1b1b;transform:scaleX(0.9600);transform-origin:0 0;">Reload</div>
<div style="position:absolute;left:290.30px;top:862.00px;width:34.40px;height:18.70px;box-sizing:border-box;background:#e9e9ed;border:1px solid #8f8f9d;border-radius:3.5px"></div>
<div style="position:absolute;left:293.96px;top:866.11px;white-space:nowrap;font-family:'Liberation Sans', sans-serif;font-weight:normal;font-size:10.8px;line-height:10.8px;color:#1b1b1b;transform:scaleX(0.9600);transform-origin:0 0;">Reset</div>
<div style="position:absolute;left:329.30px;top:862.00px;width:79.40px;height:18.70px;box-sizing:border-box;background:#e9e9ed;border:1px solid #8f8f9d;border-radius:3.5px"></div>
<div style="position:absolute;left:333.36px;top:866.11px;white-space:nowrap;font-family:'Liberation Sans', sans-serif;font-weight:normal;font-size:10.8px;line-height:10.8px;color:#1b1b1b;transform:scaleX(0.9600);transform-origin:0 0;">Show Variables</div>
<div style="position:absolute;left:413.30px;top:862.00px;width:95.40px;height:18.70px;box-sizing:border-box;background:#e9e9ed;border:1px solid #8f8f9d;border-radius:3.5px"></div>
<div style="position:absolute;left:418.06px;top:866.11px;white-space:nowrap;font-family:'Liberation Sans', sans-serif;font-weight:normal;font-size:10.8px;line-height:10.8px;color:#1b1b1b;transform:scaleX(0.9600);transform-origin:0 0;">Show Log Window</div>
<div style="position:absolute;left:513.30px;top:862.00px;width:78.40px;height:18.70px;box-sizing:border-box;background:#e9e9ed;border:1px solid #8f8f9d;border-radius:3.5px"></div>
<div style="position:absolute;left:516.47px;top:866.11px;white-space:nowrap;font-family:'Liberation Sans', sans-serif;font-weight:normal;font-size:10.8px;line-height:10.8px;color:#1b1b1b;transform:scaleX(0.9600);transform-origin:0 0;">Enable Logging</div>
<div style="position:absolute;left:1806.00px;top:862.00px;width:107.30px;height:18.70px;box-sizing:border-box;background:#e9e9ed;border:1px solid #8f8f9d;border-radius:3.5px"></div>
<div style="position:absolute;left:1811.24px;top:866.11px;white-space:nowrap;font-family:'Liberation Sans', sans-serif;font-weight:normal;font-size:10.8px;line-height:10.8px;color:#1b1b1b;transform:scaleX(0.9600);transform-origin:0 0;">How to use this page</div>
<div style="position:absolute;left:1663.30px;top:894.14px;white-space:nowrap;font-family:'Liberation Serif', serif;font-weight:normal;font-size:15px;line-height:15px;color:#ff0000;transform:scaleX(1.0754);transform-origin:0 0;">Last Updated: April 07, 2025 12:16:32</div>
<div style="position:absolute;left:6px;top:922px;width:1908px;height:2px;background:#505256"></div>
<div style="position:absolute;left:8px;top:931.5px;width:1.5px;height:1.5px;background:#333"></div>
<div style="position:absolute;left:8.30px;top:935.74px;white-space:nowrap;font-family:'Liberation Serif', serif;font-weight:normal;font-size:15px;line-height:15px;color:#0000ee;transform:scaleX(1.0475);transform-origin:0 0;">Home</div>
<div style="position:absolute;left:8.3px;top:949px;width:38.4px;height:1px;background:#0000ee"></div>
</div></body></html>
